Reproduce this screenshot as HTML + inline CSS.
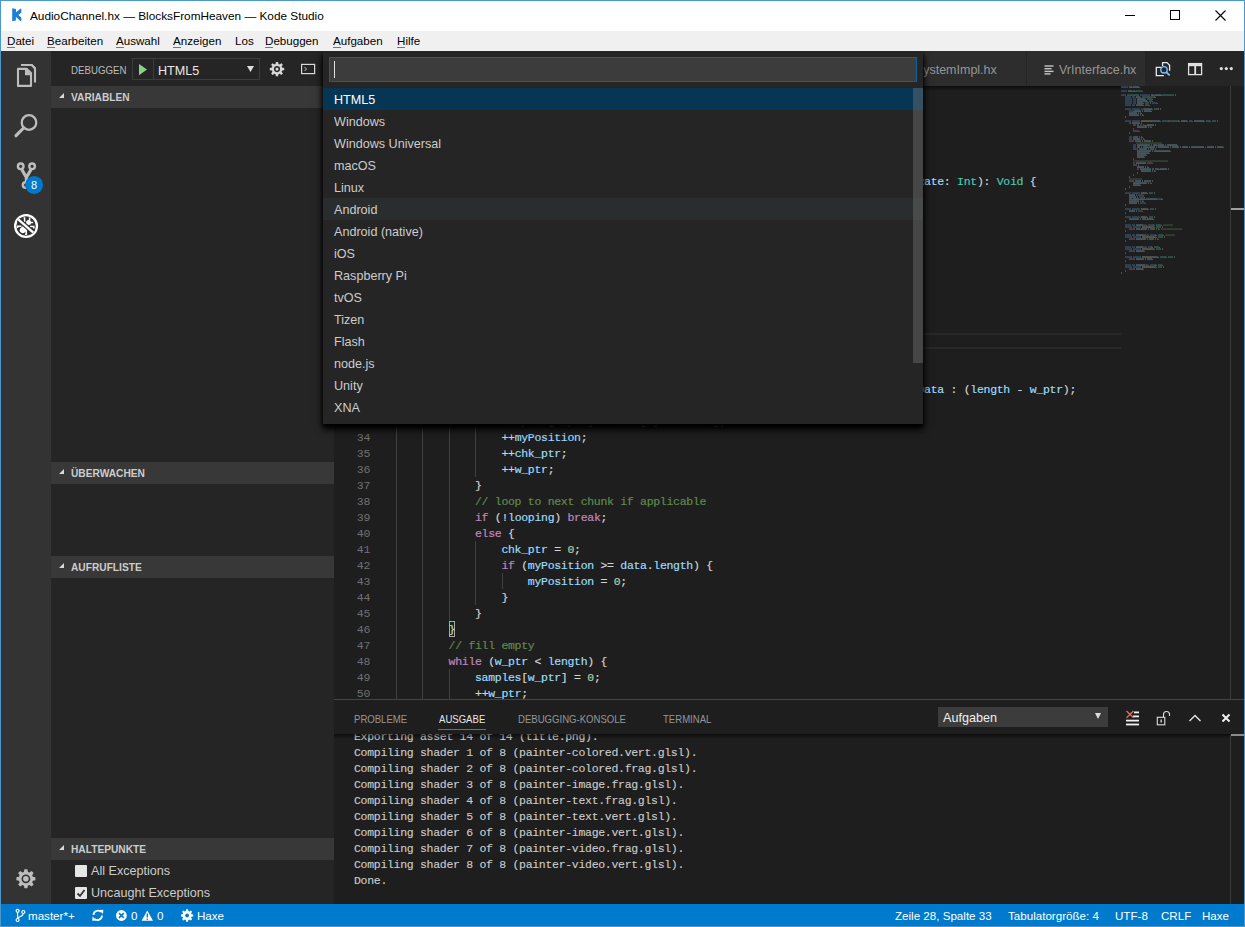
<!DOCTYPE html>
<html><head><meta charset="utf-8">
<style>
*{margin:0;padding:0;box-sizing:border-box}
html,body{width:1245px;height:927px;overflow:hidden;background:#1e1e1e;font-family:"Liberation Sans",sans-serif}
.a{position:absolute}
#title{z-index:20;left:1px;top:1px;width:1243px;height:30px;background:#fff}
#title .t{left:29px;top:7.6px;font-size:11.8px;color:#000;white-space:nowrap}
#menu{z-index:20;left:1px;top:31px;width:1243px;height:20px;background:#f0f0f0}
#menu span{position:absolute;top:3px;font-size:11.6px;color:#000;white-space:nowrap}
#menu u{text-decoration:none;border-bottom:1px solid #777;}
#act{left:1px;top:51px;width:50px;height:853px;background:#333}
#side{left:51px;top:51px;width:283px;height:853px;background:#252526;overflow:hidden}
.hdr{position:absolute;left:0;width:283px;height:22px;background:#383838;color:#ccc;font-weight:bold;font-size:10.2px}
.hdr span{position:absolute;left:20px;top:6px}
.hdr i{position:absolute;left:8px;top:7px;width:0;height:0;border-left:5.5px solid transparent;border-bottom:5.5px solid #d8d8d8}
#editor{left:334px;top:51px;width:910px;height:853px;background:#1e1e1e;overflow:hidden}
#tabs{left:0;top:0;width:910px;height:35px;background:#252526}
.tab{position:absolute;top:0;height:35px;background:#2d2d2d;color:#969696;font-size:12.5px;white-space:nowrap}
#code{left:0;top:35px;width:910px;height:614px;overflow:hidden}
.ln{position:absolute;left:0;width:36px;text-align:right;height:16px;line-height:17px;font-family:"Liberation Mono",monospace;font-size:11.5px;letter-spacing:-0.3px;color:#707070}
.cl{-webkit-text-stroke:0.18px currentColor;position:absolute;left:61.8px;height:16px;line-height:17px;font-family:"Liberation Mono",monospace;font-size:11.5px;letter-spacing:-0.3px;color:#d4d4d4;white-space:pre}
.ig{position:absolute;width:1px;height:16px;background:#404040}
#panel{left:0;top:648px;width:910px;height:205px;background:#1e1e1e;border-top:1px solid #454545;overflow:hidden}
.pt{position:absolute;top:13px;font-size:11px;transform:scaleX(.87);transform-origin:0 0;color:#969696;white-space:nowrap}
.ol{-webkit-text-stroke:0.12px currentColor;position:absolute;left:20px;height:16px;line-height:16px;font-family:"Liberation Mono",monospace;font-size:11.5px;letter-spacing:-0.3px;color:#cccccc;white-space:pre}
#status{left:1px;top:904px;width:1243px;height:22px;background:#007acc;color:#fff;font-size:11.6px}
#status span{position:absolute;top:4.7px;white-space:nowrap}
#qo{z-index:10;left:323px;top:51px;width:600px;height:373px;background:#252526;box-shadow:0 5px 8px #000,0 3px 4px #000}
.qi{position:absolute;left:0;width:600px;height:22px;color:#cccccc;font-size:12.6px}
.qi span{position:absolute;left:11px;top:5px;white-space:nowrap}
.qi.sel{background:#073655;color:#fff}
.qi.hov{background:#2a2d2e}
</style></head><body>
<div class="a" style="left:0;top:0;width:1245px;height:927px;background:#4a98cc"></div>
<div id="title" class="a">

 <span class="a t">AudioChannel.hx — BlocksFromHeaven — Kode Studio</span>
 <div class="a" style="left:1124px;top:14px;width:10px;height:1px;background:#000"></div>
 <div class="a" style="left:1169px;top:9px;width:10px;height:10px;border:1px solid #000"></div>
 <svg class="a" style="left:1214px;top:9px" width="11" height="11"><path d="M0.5 0.5 L10.5 10.5 M10.5 0.5 L0.5 10.5" stroke="#000" stroke-width="1.1"/></svg>
</div>
<div id="menu" class="a">
 <span style="left:6px"><u>D</u>atei</span>
 <span style="left:46px"><u>B</u>earbeiten</span>
 <span style="left:115px"><u>A</u>uswahl</span>
 <span style="left:172px"><u>A</u>nzeigen</span>
 <span style="left:234px">Los</span>
 <span style="left:264px"><u>D</u>ebuggen</span>
 <span style="left:332px"><u>A</u>ufgaben</span>
 <span style="left:396px"><u>H</u>ilfe</span>
</div>
<div id="act" class="a">
 
</div>
<div id="side" class="a">
 <span class="a" style="left:20px;top:12.5px;font-size:11px;transform:scaleX(.88);transform-origin:0 0;color:#bbbbbb">DEBUGGEN</span>
 <div class="a" style="left:81px;top:7px;width:128px;height:22px;border:1px solid #3c3c3c"></div>
 <div class="a" style="left:102px;top:8px;width:1px;height:20px;background:#3c3c3c"></div>
 <svg class="a" style="left:88px;top:12.5px" width="9" height="12"><path d="M0 0 L8 5.6 L0 11.2 Z" fill="#89d185"/></svg>
 <span class="a" style="left:107px;top:12.6px;font-size:12.6px;color:#e8e8e8">HTML5</span>
 <svg class="a" style="left:196px;top:15px" width="7" height="6"><path d="M0 0 L7 0 L3.5 6 Z" fill="#ddd"/></svg>
 <div class="hdr" style="top:35px"><i></i><span>VARIABLEN</span></div>
 <div class="hdr" style="top:411px"><i></i><span>ÜBERWACHEN</span></div>
 <div class="hdr" style="top:505px"><i></i><span>AUFRUFLISTE</span></div>
 <div class="hdr" style="top:787px"><i></i><span>HALTEPUNKTE</span></div>
 <div class="a" style="left:24px;top:814px;width:12px;height:12px;background:#e6e6e6;border-radius:1px"></div>
 <span class="a" style="left:40px;top:813px;font-size:12.6px;color:#cccccc">All Exceptions</span>
 <div class="a" style="left:24px;top:836px;width:12px;height:12px;background:#e6e6e6;border-radius:1px"></div>
 <svg class="a" style="left:24px;top:836px" width="12" height="12"><path d="M2.5 6.5 L5 9 L9.5 3" stroke="#333" stroke-width="1.8" fill="none"/></svg>
 <span class="a" style="left:40px;top:835px;font-size:12.6px;color:#cccccc">Uncaught Exceptions</span>
</div>
<div id="editor" class="a">
 <div id="tabs" class="a">
  <div class="tab" style="left:0;width:692px"><span class="a" style="left:544px;top:12px">BlocksSystemImpl.hx</span></div>
  <div class="tab" style="left:693px;width:118px"><span class="a" style="left:32px;top:12px">VrInterface.hx</span></div>
 </div>
 <div id="code" class="a">
  <div class="a" style="left:0;top:247px;width:787px;height:16px;border-top:2px solid #282828;border-bottom:2px solid #282828"></div>
  <div class="a" style="left:115px;top:535px;width:6px;height:16px;border:1px solid #a8a8a8;background:#0a2a1a"></div>
  <div class="ig" style="left:62.0px;top:-9px"></div><div class="ig" style="left:62.0px;top:7px"></div><div class="ig" style="left:88.4px;top:7px"></div><div class="ig" style="left:62.0px;top:23px"></div><div class="ig" style="left:88.4px;top:23px"></div><div class="ig" style="left:62.0px;top:39px"></div><div class="ig" style="left:88.4px;top:39px"></div><div class="ig" style="left:62.0px;top:55px"></div><div class="ig" style="left:62.0px;top:71px"></div><div class="ig" style="left:62.0px;top:87px"></div><div class="ig" style="left:62.0px;top:103px"></div><div class="ig" style="left:88.4px;top:103px"></div><div class="ig" style="left:62.0px;top:119px"></div><div class="ig" style="left:88.4px;top:119px"></div><div class="ig" style="left:114.8px;top:119px"></div><div class="ig" style="left:62.0px;top:135px"></div><div class="ig" style="left:88.4px;top:135px"></div><div class="ig" style="left:114.8px;top:135px"></div><div class="ig" style="left:141.2px;top:135px"></div><div class="ig" style="left:62.0px;top:151px"></div><div class="ig" style="left:88.4px;top:151px"></div><div class="ig" style="left:114.8px;top:151px"></div><div class="ig" style="left:62.0px;top:167px"></div><div class="ig" style="left:88.4px;top:167px"></div><div class="ig" style="left:114.8px;top:167px"></div><div class="ig" style="left:62.0px;top:183px"></div><div class="ig" style="left:88.4px;top:183px"></div><div class="ig" style="left:62.0px;top:199px"></div><div class="ig" style="left:88.4px;top:199px"></div><div class="ig" style="left:62.0px;top:215px"></div><div class="ig" style="left:88.4px;top:215px"></div><div class="ig" style="left:62.0px;top:231px"></div><div class="ig" style="left:88.4px;top:231px"></div><div class="ig" style="left:62.0px;top:247px"></div><div class="ig" style="left:88.4px;top:247px"></div><div class="ig" style="left:62.0px;top:263px"></div><div class="ig" style="left:88.4px;top:263px"></div><div class="ig" style="left:114.8px;top:263px"></div><div class="ig" style="left:62.0px;top:279px"></div><div class="ig" style="left:88.4px;top:279px"></div><div class="ig" style="left:114.8px;top:279px"></div><div class="ig" style="left:62.0px;top:295px"></div><div class="ig" style="left:88.4px;top:295px"></div><div class="ig" style="left:114.8px;top:295px"></div><div class="ig" style="left:62.0px;top:311px"></div><div class="ig" style="left:88.4px;top:311px"></div><div class="ig" style="left:114.8px;top:311px"></div><div class="ig" style="left:62.0px;top:327px"></div><div class="ig" style="left:88.4px;top:327px"></div><div class="ig" style="left:114.8px;top:327px"></div><div class="ig" style="left:141.2px;top:327px"></div><div class="ig" style="left:62.0px;top:343px"></div><div class="ig" style="left:88.4px;top:343px"></div><div class="ig" style="left:114.8px;top:343px"></div><div class="ig" style="left:141.2px;top:343px"></div><div class="ig" style="left:62.0px;top:359px"></div><div class="ig" style="left:88.4px;top:359px"></div><div class="ig" style="left:114.8px;top:359px"></div><div class="ig" style="left:141.2px;top:359px"></div><div class="ig" style="left:62.0px;top:375px"></div><div class="ig" style="left:88.4px;top:375px"></div><div class="ig" style="left:114.8px;top:375px"></div><div class="ig" style="left:141.2px;top:375px"></div><div class="ig" style="left:62.0px;top:391px"></div><div class="ig" style="left:88.4px;top:391px"></div><div class="ig" style="left:114.8px;top:391px"></div><div class="ig" style="left:62.0px;top:407px"></div><div class="ig" style="left:88.4px;top:407px"></div><div class="ig" style="left:114.8px;top:407px"></div><div class="ig" style="left:62.0px;top:423px"></div><div class="ig" style="left:88.4px;top:423px"></div><div class="ig" style="left:114.8px;top:423px"></div><div class="ig" style="left:62.0px;top:439px"></div><div class="ig" style="left:88.4px;top:439px"></div><div class="ig" style="left:114.8px;top:439px"></div><div class="ig" style="left:62.0px;top:455px"></div><div class="ig" style="left:88.4px;top:455px"></div><div class="ig" style="left:114.8px;top:455px"></div><div class="ig" style="left:141.2px;top:455px"></div><div class="ig" style="left:62.0px;top:471px"></div><div class="ig" style="left:88.4px;top:471px"></div><div class="ig" style="left:114.8px;top:471px"></div><div class="ig" style="left:141.2px;top:471px"></div><div class="ig" style="left:62.0px;top:487px"></div><div class="ig" style="left:88.4px;top:487px"></div><div class="ig" style="left:114.8px;top:487px"></div><div class="ig" style="left:141.2px;top:487px"></div><div class="ig" style="left:167.6px;top:487px"></div><div class="ig" style="left:62.0px;top:503px"></div><div class="ig" style="left:88.4px;top:503px"></div><div class="ig" style="left:114.8px;top:503px"></div><div class="ig" style="left:141.2px;top:503px"></div><div class="ig" style="left:62.0px;top:519px"></div><div class="ig" style="left:88.4px;top:519px"></div><div class="ig" style="left:114.8px;top:519px"></div><div class="ig" style="left:62.0px;top:535px"></div><div class="ig" style="left:88.4px;top:535px"></div><div class="ig" style="left:62.0px;top:551px"></div><div class="ig" style="left:88.4px;top:551px"></div><div class="ig" style="left:62.0px;top:567px"></div><div class="ig" style="left:88.4px;top:567px"></div><div class="ig" style="left:62.0px;top:583px"></div><div class="ig" style="left:88.4px;top:583px"></div><div class="ig" style="left:114.8px;top:583px"></div><div class="ig" style="left:62.0px;top:599px"></div><div class="ig" style="left:88.4px;top:599px"></div><div class="ig" style="left:114.8px;top:599px"></div><div class="ig" style="left:62.0px;top:615px"></div><div class="ig" style="left:88.4px;top:615px"></div>
  <div class="ln" style="top:-9px">12</div>
<div class="cl" style="top:-9px">    <span style="color:#569cd6">public</span> <span style="color:#569cd6">function</span> <span style="color:#569cd6">new</span><span style="color:#d4d4d4">(</span><span style="color:#9cdcfe">looping</span><span style="color:#d4d4d4">:</span> <span style="color:#4ec9b0">Bool</span><span style="color:#d4d4d4">)</span> <span style="color:#d4d4d4">{</span></div>
<div class="ln" style="top:7px">13</div>
<div class="cl" style="top:7px">        <span style="color:#569cd6">this</span><span style="color:#d4d4d4">.</span><span style="color:#9cdcfe">looping</span> <span style="color:#d4d4d4">=</span> <span style="color:#9cdcfe">looping</span><span style="color:#d4d4d4">;</span></div>
<div class="ln" style="top:23px">14</div>
<div class="cl" style="top:23px">        <span style="color:#9cdcfe">myVolume</span> <span style="color:#d4d4d4">=</span> <span style="color:#b5cea8">1</span><span style="color:#d4d4d4">;</span></div>
<div class="ln" style="top:39px">15</div>
<div class="cl" style="top:39px">        <span style="color:#9cdcfe">myPosition</span> <span style="color:#d4d4d4">=</span> <span style="color:#b5cea8">0</span><span style="color:#d4d4d4">;</span></div>
<div class="ln" style="top:55px">16</div>
<div class="cl" style="top:55px">    <span style="color:#d4d4d4">}</span></div>
<div class="ln" style="top:71px">17</div>
<div class="cl" style="top:71px"></div>
<div class="ln" style="top:87px">18</div>
<div class="cl" style="top:87px">    <span style="color:#569cd6">public</span> <span style="color:#569cd6">function</span> <span style="color:#dcdcaa">nextSamples</span><span style="color:#d4d4d4">(</span><span style="color:#9cdcfe">samples</span><span style="color:#d4d4d4">:</span> <span style="color:#4ec9b0">Vector</span><span style="color:#d4d4d4">&lt;</span><span style="color:#4ec9b0">FastFloat</span><span style="color:#d4d4d4">&gt;</span><span style="color:#d4d4d4">,</span> <span style="color:#9cdcfe">length</span><span style="color:#d4d4d4">:</span> <span style="color:#4ec9b0">Int</span><span style="color:#d4d4d4">,</span> <span style="color:#9cdcfe">sampleRate</span><span style="color:#d4d4d4">:</span> <span style="color:#4ec9b0">Int</span><span style="color:#d4d4d4">)</span><span style="color:#d4d4d4">:</span> <span style="color:#4ec9b0">Void</span> <span style="color:#d4d4d4">{</span></div>
<div class="ln" style="top:103px">19</div>
<div class="cl" style="top:103px">        <span style="color:#c586c0">if</span> <span style="color:#d4d4d4">(</span><span style="color:#9cdcfe">paused</span><span style="color:#d4d4d4">)</span> <span style="color:#d4d4d4">{</span></div>
<div class="ln" style="top:119px">20</div>
<div class="cl" style="top:119px">            <span style="color:#c586c0">for</span> <span style="color:#d4d4d4">(</span><span style="color:#9cdcfe">i</span> <span style="color:#c586c0">in</span> <span style="color:#b5cea8">0</span><span style="color:#d4d4d4">.</span><span style="color:#d4d4d4">.</span><span style="color:#d4d4d4">.</span><span style="color:#9cdcfe">length</span><span style="color:#d4d4d4">)</span> <span style="color:#d4d4d4">{</span></div>
<div class="ln" style="top:135px">21</div>
<div class="cl" style="top:135px">                <span style="color:#9cdcfe">samples</span><span style="color:#d4d4d4">[</span><span style="color:#9cdcfe">i</span><span style="color:#d4d4d4">]</span> <span style="color:#d4d4d4">=</span> <span style="color:#b5cea8">0</span><span style="color:#d4d4d4">;</span></div>
<div class="ln" style="top:151px">22</div>
<div class="cl" style="top:151px">            <span style="color:#d4d4d4">}</span></div>
<div class="ln" style="top:167px">23</div>
<div class="cl" style="top:167px">            <span style="color:#c586c0">return</span><span style="color:#d4d4d4">;</span></div>
<div class="ln" style="top:183px">24</div>
<div class="cl" style="top:183px">        <span style="color:#d4d4d4">}</span></div>
<div class="ln" style="top:199px">25</div>
<div class="cl" style="top:199px"></div>
<div class="ln" style="top:215px">26</div>
<div class="cl" style="top:215px">        <span style="color:#569cd6">var</span> <span style="color:#9cdcfe">w_ptr</span> <span style="color:#d4d4d4">=</span> <span style="color:#b5cea8">0</span><span style="color:#d4d4d4">;</span></div>
<div class="ln" style="top:231px">27</div>
<div class="cl" style="top:231px">        <span style="color:#569cd6">var</span> <span style="color:#9cdcfe">chk_ptr</span> <span style="color:#d4d4d4">=</span> <span style="color:#b5cea8">0</span><span style="color:#d4d4d4">;</span></div>
<div class="ln" style="top:247px">28</div>
<div class="cl" style="top:247px">        <span style="color:#c586c0">while</span> <span style="color:#d4d4d4">(</span><span style="color:#9cdcfe">w_ptr</span> <span style="color:#d4d4d4">&lt;</span> <span style="color:#9cdcfe">length</span><span style="color:#d4d4d4">)</span> <span style="color:#d4d4d4">{</span></div>
<div class="ln" style="top:263px">29</div>
<div class="cl" style="top:263px">               <span style="color:#608b4e">// compute chunk to stream</span></div>
<div class="ln" style="top:279px">30</div>
<div class="cl" style="top:279px">            <span style="color:#569cd6">var</span> <span style="color:#9cdcfe">remainingData</span> <span style="color:#d4d4d4">=</span> <span style="color:#9cdcfe">data</span><span style="color:#d4d4d4">.</span><span style="color:#9cdcfe">length</span> <span style="color:#d4d4d4">-</span> <span style="color:#9cdcfe">myPosition</span><span style="color:#d4d4d4">;</span></div>
<div class="ln" style="top:295px">31</div>
<div class="cl" style="top:295px">            <span style="color:#569cd6">var</span> <span style="color:#9cdcfe">chk</span> <span style="color:#d4d4d4">=</span> <span style="color:#d4d4d4">(</span><span style="color:#9cdcfe">data</span><span style="color:#d4d4d4">.</span><span style="color:#9cdcfe">length</span> <span style="color:#d4d4d4">-</span> <span style="color:#9cdcfe">myPosition</span><span style="color:#d4d4d4">)</span> <span style="color:#d4d4d4">&lt;</span> <span style="color:#d4d4d4">(</span><span style="color:#9cdcfe">length</span> <span style="color:#d4d4d4">-</span> <span style="color:#9cdcfe">w_ptr</span><span style="color:#d4d4d4">)</span> <span style="color:#d4d4d4">?</span> <span style="color:#9cdcfe">remainingData</span> <span style="color:#d4d4d4">:</span> <span style="color:#d4d4d4">(</span><span style="color:#9cdcfe">length</span> <span style="color:#d4d4d4">-</span> <span style="color:#9cdcfe">w_ptr</span><span style="color:#d4d4d4">)</span><span style="color:#d4d4d4">;</span></div>
<div class="ln" style="top:311px">32</div>
<div class="cl" style="top:311px">            <span style="color:#c586c0">while</span> <span style="color:#d4d4d4">(</span><span style="color:#9cdcfe">chk_ptr</span> <span style="color:#d4d4d4">&lt;</span> <span style="color:#9cdcfe">chk</span><span style="color:#d4d4d4">)</span> <span style="color:#d4d4d4">{</span></div>
<div class="ln" style="top:327px">33</div>
<div class="cl" style="top:327px">                <span style="color:#9cdcfe">samples</span><span style="color:#d4d4d4">[</span><span style="color:#9cdcfe">w_ptr</span><span style="color:#d4d4d4">]</span> <span style="color:#d4d4d4">=</span> <span style="color:#9cdcfe">data</span><span style="color:#d4d4d4">[</span><span style="color:#9cdcfe">myPosition</span><span style="color:#d4d4d4">]</span><span style="color:#d4d4d4">;</span></div>
<div class="ln" style="top:343px">34</div>
<div class="cl" style="top:343px">                <span style="color:#d4d4d4">+</span><span style="color:#d4d4d4">+</span><span style="color:#9cdcfe">myPosition</span><span style="color:#d4d4d4">;</span></div>
<div class="ln" style="top:359px">35</div>
<div class="cl" style="top:359px">                <span style="color:#d4d4d4">+</span><span style="color:#d4d4d4">+</span><span style="color:#9cdcfe">chk_ptr</span><span style="color:#d4d4d4">;</span></div>
<div class="ln" style="top:375px">36</div>
<div class="cl" style="top:375px">                <span style="color:#d4d4d4">+</span><span style="color:#d4d4d4">+</span><span style="color:#9cdcfe">w_ptr</span><span style="color:#d4d4d4">;</span></div>
<div class="ln" style="top:391px">37</div>
<div class="cl" style="top:391px">            <span style="color:#d4d4d4">}</span></div>
<div class="ln" style="top:407px">38</div>
<div class="cl" style="top:407px">            <span style="color:#608b4e">// loop to next chunk if applicable</span></div>
<div class="ln" style="top:423px">39</div>
<div class="cl" style="top:423px">            <span style="color:#c586c0">if</span> <span style="color:#d4d4d4">(</span><span style="color:#d4d4d4">!</span><span style="color:#9cdcfe">looping</span><span style="color:#d4d4d4">)</span> <span style="color:#c586c0">break</span><span style="color:#d4d4d4">;</span></div>
<div class="ln" style="top:439px">40</div>
<div class="cl" style="top:439px">            <span style="color:#c586c0">else</span> <span style="color:#d4d4d4">{</span></div>
<div class="ln" style="top:455px">41</div>
<div class="cl" style="top:455px">                <span style="color:#9cdcfe">chk_ptr</span> <span style="color:#d4d4d4">=</span> <span style="color:#b5cea8">0</span><span style="color:#d4d4d4">;</span></div>
<div class="ln" style="top:471px">42</div>
<div class="cl" style="top:471px">                <span style="color:#c586c0">if</span> <span style="color:#d4d4d4">(</span><span style="color:#9cdcfe">myPosition</span> <span style="color:#d4d4d4">&gt;</span><span style="color:#d4d4d4">=</span> <span style="color:#9cdcfe">data</span><span style="color:#d4d4d4">.</span><span style="color:#9cdcfe">length</span><span style="color:#d4d4d4">)</span> <span style="color:#d4d4d4">{</span></div>
<div class="ln" style="top:487px">43</div>
<div class="cl" style="top:487px">                    <span style="color:#9cdcfe">myPosition</span> <span style="color:#d4d4d4">=</span> <span style="color:#b5cea8">0</span><span style="color:#d4d4d4">;</span></div>
<div class="ln" style="top:503px">44</div>
<div class="cl" style="top:503px">                <span style="color:#d4d4d4">}</span></div>
<div class="ln" style="top:519px">45</div>
<div class="cl" style="top:519px">            <span style="color:#d4d4d4">}</span></div>
<div class="ln" style="top:535px">46</div>
<div class="cl" style="top:535px">        <span style="color:#d4d4d4">}</span></div>
<div class="ln" style="top:551px">47</div>
<div class="cl" style="top:551px">        <span style="color:#608b4e">// fill empty</span></div>
<div class="ln" style="top:567px">48</div>
<div class="cl" style="top:567px">        <span style="color:#c586c0">while</span> <span style="color:#d4d4d4">(</span><span style="color:#9cdcfe">w_ptr</span> <span style="color:#d4d4d4">&lt;</span> <span style="color:#9cdcfe">length</span><span style="color:#d4d4d4">)</span> <span style="color:#d4d4d4">{</span></div>
<div class="ln" style="top:583px">49</div>
<div class="cl" style="top:583px">            <span style="color:#9cdcfe">samples</span><span style="color:#d4d4d4">[</span><span style="color:#9cdcfe">w_ptr</span><span style="color:#d4d4d4">]</span> <span style="color:#d4d4d4">=</span> <span style="color:#b5cea8">0</span><span style="color:#d4d4d4">;</span></div>
<div class="ln" style="top:599px">50</div>
<div class="cl" style="top:599px">            <span style="color:#d4d4d4">+</span><span style="color:#d4d4d4">+</span><span style="color:#9cdcfe">w_ptr</span><span style="color:#d4d4d4">;</span></div>
<div class="ln" style="top:615px">51</div>
<div class="cl" style="top:615px">        <span style="color:#d4d4d4">}</span></div>
 </div>
 <svg class="a" style="left:787px;top:35px;opacity:.5" width="110" height="200"><rect x="0" y="0.4" width="0.85" height="1.3" fill="#569cd6"/><rect x="1" y="0.4" width="0.85" height="1.3" fill="#569cd6"/><rect x="2" y="0.4" width="0.85" height="1.3" fill="#569cd6"/><rect x="3" y="0.4" width="0.85" height="1.3" fill="#569cd6"/><rect x="4" y="0.4" width="0.85" height="1.3" fill="#569cd6"/><rect x="5" y="0.4" width="0.85" height="1.3" fill="#569cd6"/><rect x="6" y="0.4" width="0.85" height="1.3" fill="#569cd6"/><rect x="8" y="0.4" width="0.85" height="1.3" fill="#9cdcfe"/><rect x="9" y="0.4" width="0.85" height="1.3" fill="#9cdcfe"/><rect x="10" y="0.4" width="0.85" height="1.3" fill="#9cdcfe"/><rect x="11.1" y="0.9" width="0.7" height="0.9" fill="#d4d4d4"/><rect x="12" y="0.4" width="0.85" height="1.3" fill="#9cdcfe"/><rect x="13" y="0.4" width="0.85" height="1.3" fill="#9cdcfe"/><rect x="14" y="0.4" width="0.85" height="1.3" fill="#9cdcfe"/><rect x="15" y="0.4" width="0.85" height="1.3" fill="#9cdcfe"/><rect x="16" y="0.4" width="0.85" height="1.3" fill="#9cdcfe"/><rect x="17" y="0.4" width="0.85" height="1.3" fill="#9cdcfe"/><rect x="18.1" y="0.9" width="0.7" height="0.9" fill="#d4d4d4"/><rect x="0" y="4.4" width="0.85" height="1.3" fill="#569cd6"/><rect x="1" y="4.4" width="0.85" height="1.3" fill="#569cd6"/><rect x="2" y="4.4" width="0.85" height="1.3" fill="#569cd6"/><rect x="3" y="4.4" width="0.85" height="1.3" fill="#569cd6"/><rect x="4" y="4.4" width="0.85" height="1.3" fill="#569cd6"/><rect x="5" y="4.4" width="0.85" height="1.3" fill="#569cd6"/><rect x="7" y="4.4" width="0.85" height="1.3" fill="#9cdcfe"/><rect x="8" y="4.4" width="0.85" height="1.3" fill="#9cdcfe"/><rect x="9" y="4.4" width="0.85" height="1.3" fill="#9cdcfe"/><rect x="10" y="4.4" width="0.85" height="1.3" fill="#9cdcfe"/><rect x="11.1" y="4.9" width="0.7" height="0.9" fill="#d4d4d4"/><rect x="12" y="4.4" width="0.85" height="1.3" fill="#9cdcfe"/><rect x="13" y="4.4" width="0.85" height="1.3" fill="#9cdcfe"/><rect x="14.1" y="4.9" width="0.7" height="0.9" fill="#d4d4d4"/><rect x="15" y="4.4" width="0.85" height="1.3" fill="#4ec9b0"/><rect x="16" y="4.4" width="0.85" height="1.3" fill="#4ec9b0"/><rect x="17" y="4.4" width="0.85" height="1.3" fill="#4ec9b0"/><rect x="18" y="4.4" width="0.85" height="1.3" fill="#4ec9b0"/><rect x="19" y="4.4" width="0.85" height="1.3" fill="#4ec9b0"/><rect x="20" y="4.4" width="0.85" height="1.3" fill="#4ec9b0"/><rect x="21.1" y="4.9" width="0.7" height="0.9" fill="#d4d4d4"/><rect x="0" y="8.4" width="0.85" height="1.3" fill="#569cd6"/><rect x="1" y="8.4" width="0.85" height="1.3" fill="#569cd6"/><rect x="2" y="8.4" width="0.85" height="1.3" fill="#569cd6"/><rect x="3" y="8.4" width="0.85" height="1.3" fill="#569cd6"/><rect x="4" y="8.4" width="0.85" height="1.3" fill="#569cd6"/><rect x="6" y="8.4" width="0.85" height="1.3" fill="#4ec9b0"/><rect x="7" y="8.4" width="0.85" height="1.3" fill="#4ec9b0"/><rect x="8" y="8.4" width="0.85" height="1.3" fill="#4ec9b0"/><rect x="9" y="8.4" width="0.85" height="1.3" fill="#4ec9b0"/><rect x="10" y="8.4" width="0.85" height="1.3" fill="#4ec9b0"/><rect x="11" y="8.4" width="0.85" height="1.3" fill="#4ec9b0"/><rect x="12" y="8.4" width="0.85" height="1.3" fill="#4ec9b0"/><rect x="13" y="8.4" width="0.85" height="1.3" fill="#4ec9b0"/><rect x="14" y="8.4" width="0.85" height="1.3" fill="#4ec9b0"/><rect x="15" y="8.4" width="0.85" height="1.3" fill="#4ec9b0"/><rect x="16" y="8.4" width="0.85" height="1.3" fill="#4ec9b0"/><rect x="17" y="8.4" width="0.85" height="1.3" fill="#4ec9b0"/><rect x="19" y="8.4" width="0.85" height="1.3" fill="#569cd6"/><rect x="20" y="8.4" width="0.85" height="1.3" fill="#569cd6"/><rect x="21" y="8.4" width="0.85" height="1.3" fill="#569cd6"/><rect x="22" y="8.4" width="0.85" height="1.3" fill="#569cd6"/><rect x="23" y="8.4" width="0.85" height="1.3" fill="#569cd6"/><rect x="24" y="8.4" width="0.85" height="1.3" fill="#569cd6"/><rect x="25" y="8.4" width="0.85" height="1.3" fill="#569cd6"/><rect x="26" y="8.4" width="0.85" height="1.3" fill="#569cd6"/><rect x="27" y="8.4" width="0.85" height="1.3" fill="#569cd6"/><rect x="28" y="8.4" width="0.85" height="1.3" fill="#569cd6"/><rect x="30" y="8.4" width="0.85" height="1.3" fill="#9cdcfe"/><rect x="31" y="8.4" width="0.85" height="1.3" fill="#9cdcfe"/><rect x="32" y="8.4" width="0.85" height="1.3" fill="#9cdcfe"/><rect x="33.1" y="8.9" width="0.7" height="0.9" fill="#d4d4d4"/><rect x="34" y="8.4" width="0.85" height="1.3" fill="#9cdcfe"/><rect x="35" y="8.4" width="0.85" height="1.3" fill="#9cdcfe"/><rect x="36" y="8.4" width="0.85" height="1.3" fill="#9cdcfe"/><rect x="37" y="8.4" width="0.85" height="1.3" fill="#9cdcfe"/><rect x="38" y="8.4" width="0.85" height="1.3" fill="#9cdcfe"/><rect x="39" y="8.4" width="0.85" height="1.3" fill="#9cdcfe"/><rect x="40.1" y="8.9" width="0.7" height="0.9" fill="#d4d4d4"/><rect x="41" y="8.4" width="0.85" height="1.3" fill="#4ec9b0"/><rect x="42" y="8.4" width="0.85" height="1.3" fill="#4ec9b0"/><rect x="43" y="8.4" width="0.85" height="1.3" fill="#4ec9b0"/><rect x="44" y="8.4" width="0.85" height="1.3" fill="#4ec9b0"/><rect x="45" y="8.4" width="0.85" height="1.3" fill="#4ec9b0"/><rect x="46" y="8.4" width="0.85" height="1.3" fill="#4ec9b0"/><rect x="47" y="8.4" width="0.85" height="1.3" fill="#4ec9b0"/><rect x="48" y="8.4" width="0.85" height="1.3" fill="#4ec9b0"/><rect x="49" y="8.4" width="0.85" height="1.3" fill="#4ec9b0"/><rect x="50" y="8.4" width="0.85" height="1.3" fill="#4ec9b0"/><rect x="51" y="8.4" width="0.85" height="1.3" fill="#4ec9b0"/><rect x="52" y="8.4" width="0.85" height="1.3" fill="#4ec9b0"/><rect x="54.1" y="8.4" width="0.8" height="1.3" fill="#d4d4d4"/><rect x="4" y="10.4" width="0.85" height="1.3" fill="#569cd6"/><rect x="5" y="10.4" width="0.85" height="1.3" fill="#569cd6"/><rect x="6" y="10.4" width="0.85" height="1.3" fill="#569cd6"/><rect x="7" y="10.4" width="0.85" height="1.3" fill="#569cd6"/><rect x="8" y="10.4" width="0.85" height="1.3" fill="#569cd6"/><rect x="9" y="10.4" width="0.85" height="1.3" fill="#569cd6"/><rect x="11" y="10.4" width="0.85" height="1.3" fill="#569cd6"/><rect x="12" y="10.4" width="0.85" height="1.3" fill="#569cd6"/><rect x="13" y="10.4" width="0.85" height="1.3" fill="#569cd6"/><rect x="15" y="10.4" width="0.85" height="1.3" fill="#9cdcfe"/><rect x="16" y="10.4" width="0.85" height="1.3" fill="#9cdcfe"/><rect x="17" y="10.4" width="0.85" height="1.3" fill="#9cdcfe"/><rect x="18" y="10.4" width="0.85" height="1.3" fill="#9cdcfe"/><rect x="19.1" y="10.9" width="0.7" height="0.9" fill="#d4d4d4"/><rect x="21" y="10.4" width="0.85" height="1.3" fill="#4ec9b0"/><rect x="22" y="10.4" width="0.85" height="1.3" fill="#4ec9b0"/><rect x="23" y="10.4" width="0.85" height="1.3" fill="#4ec9b0"/><rect x="24" y="10.4" width="0.85" height="1.3" fill="#4ec9b0"/><rect x="25" y="10.4" width="0.85" height="1.3" fill="#4ec9b0"/><rect x="26" y="10.4" width="0.85" height="1.3" fill="#4ec9b0"/><rect x="27.1" y="10.4" width="0.8" height="1.3" fill="#d4d4d4"/><rect x="28" y="10.4" width="0.85" height="1.3" fill="#4ec9b0"/><rect x="29" y="10.4" width="0.85" height="1.3" fill="#4ec9b0"/><rect x="30" y="10.4" width="0.85" height="1.3" fill="#4ec9b0"/><rect x="31" y="10.4" width="0.85" height="1.3" fill="#4ec9b0"/><rect x="32" y="10.4" width="0.85" height="1.3" fill="#4ec9b0"/><rect x="33.1" y="10.4" width="0.8" height="1.3" fill="#d4d4d4"/><rect x="34.1" y="10.9" width="0.7" height="0.9" fill="#d4d4d4"/><rect x="4" y="12.4" width="0.85" height="1.3" fill="#569cd6"/><rect x="5" y="12.4" width="0.85" height="1.3" fill="#569cd6"/><rect x="6" y="12.4" width="0.85" height="1.3" fill="#569cd6"/><rect x="7" y="12.4" width="0.85" height="1.3" fill="#569cd6"/><rect x="8" y="12.4" width="0.85" height="1.3" fill="#569cd6"/><rect x="9" y="12.4" width="0.85" height="1.3" fill="#569cd6"/><rect x="10" y="12.4" width="0.85" height="1.3" fill="#569cd6"/><rect x="12" y="12.4" width="0.85" height="1.3" fill="#569cd6"/><rect x="13" y="12.4" width="0.85" height="1.3" fill="#569cd6"/><rect x="14" y="12.4" width="0.85" height="1.3" fill="#569cd6"/><rect x="16" y="12.4" width="0.85" height="1.3" fill="#9cdcfe"/><rect x="17" y="12.4" width="0.85" height="1.3" fill="#9cdcfe"/><rect x="18" y="12.4" width="0.85" height="1.3" fill="#9cdcfe"/><rect x="19" y="12.4" width="0.85" height="1.3" fill="#9cdcfe"/><rect x="20" y="12.4" width="0.85" height="1.3" fill="#9cdcfe"/><rect x="21" y="12.4" width="0.85" height="1.3" fill="#9cdcfe"/><rect x="22" y="12.4" width="0.85" height="1.3" fill="#9cdcfe"/><rect x="23" y="12.4" width="0.85" height="1.3" fill="#9cdcfe"/><rect x="24.1" y="12.9" width="0.7" height="0.9" fill="#d4d4d4"/><rect x="26" y="12.4" width="0.85" height="1.3" fill="#4ec9b0"/><rect x="27" y="12.4" width="0.85" height="1.3" fill="#4ec9b0"/><rect x="28" y="12.4" width="0.85" height="1.3" fill="#4ec9b0"/><rect x="29" y="12.4" width="0.85" height="1.3" fill="#4ec9b0"/><rect x="30" y="12.4" width="0.85" height="1.3" fill="#4ec9b0"/><rect x="31.1" y="12.9" width="0.7" height="0.9" fill="#d4d4d4"/><rect x="4" y="14.4" width="0.85" height="1.3" fill="#569cd6"/><rect x="5" y="14.4" width="0.85" height="1.3" fill="#569cd6"/><rect x="6" y="14.4" width="0.85" height="1.3" fill="#569cd6"/><rect x="7" y="14.4" width="0.85" height="1.3" fill="#569cd6"/><rect x="8" y="14.4" width="0.85" height="1.3" fill="#569cd6"/><rect x="9" y="14.4" width="0.85" height="1.3" fill="#569cd6"/><rect x="10" y="14.4" width="0.85" height="1.3" fill="#569cd6"/><rect x="12" y="14.4" width="0.85" height="1.3" fill="#569cd6"/><rect x="13" y="14.4" width="0.85" height="1.3" fill="#569cd6"/><rect x="14" y="14.4" width="0.85" height="1.3" fill="#569cd6"/><rect x="16" y="14.4" width="0.85" height="1.3" fill="#9cdcfe"/><rect x="17" y="14.4" width="0.85" height="1.3" fill="#9cdcfe"/><rect x="18" y="14.4" width="0.85" height="1.3" fill="#9cdcfe"/><rect x="19" y="14.4" width="0.85" height="1.3" fill="#9cdcfe"/><rect x="20" y="14.4" width="0.85" height="1.3" fill="#9cdcfe"/><rect x="21" y="14.4" width="0.85" height="1.3" fill="#9cdcfe"/><rect x="22" y="14.4" width="0.85" height="1.3" fill="#9cdcfe"/><rect x="23" y="14.4" width="0.85" height="1.3" fill="#9cdcfe"/><rect x="24" y="14.4" width="0.85" height="1.3" fill="#9cdcfe"/><rect x="25" y="14.4" width="0.85" height="1.3" fill="#9cdcfe"/><rect x="26.1" y="14.9" width="0.7" height="0.9" fill="#d4d4d4"/><rect x="28" y="14.4" width="0.85" height="1.3" fill="#4ec9b0"/><rect x="29" y="14.4" width="0.85" height="1.3" fill="#4ec9b0"/><rect x="30" y="14.4" width="0.85" height="1.3" fill="#4ec9b0"/><rect x="31.1" y="14.9" width="0.7" height="0.9" fill="#d4d4d4"/><rect x="4" y="16.4" width="0.85" height="1.3" fill="#569cd6"/><rect x="5" y="16.4" width="0.85" height="1.3" fill="#569cd6"/><rect x="6" y="16.4" width="0.85" height="1.3" fill="#569cd6"/><rect x="7" y="16.4" width="0.85" height="1.3" fill="#569cd6"/><rect x="8" y="16.4" width="0.85" height="1.3" fill="#569cd6"/><rect x="9" y="16.4" width="0.85" height="1.3" fill="#569cd6"/><rect x="10" y="16.4" width="0.85" height="1.3" fill="#569cd6"/><rect x="12" y="16.4" width="0.85" height="1.3" fill="#569cd6"/><rect x="13" y="16.4" width="0.85" height="1.3" fill="#569cd6"/><rect x="14" y="16.4" width="0.85" height="1.3" fill="#569cd6"/><rect x="16" y="16.4" width="0.85" height="1.3" fill="#9cdcfe"/><rect x="17" y="16.4" width="0.85" height="1.3" fill="#9cdcfe"/><rect x="18" y="16.4" width="0.85" height="1.3" fill="#9cdcfe"/><rect x="19" y="16.4" width="0.85" height="1.3" fill="#9cdcfe"/><rect x="20" y="16.4" width="0.85" height="1.3" fill="#9cdcfe"/><rect x="21" y="16.4" width="0.85" height="1.3" fill="#9cdcfe"/><rect x="22.1" y="16.9" width="0.7" height="0.9" fill="#d4d4d4"/><rect x="24" y="16.4" width="0.85" height="1.3" fill="#4ec9b0"/><rect x="25" y="16.4" width="0.85" height="1.3" fill="#4ec9b0"/><rect x="26" y="16.4" width="0.85" height="1.3" fill="#4ec9b0"/><rect x="27" y="16.4" width="0.85" height="1.3" fill="#4ec9b0"/><rect x="29.1" y="16.4" width="0.8" height="1.3" fill="#d4d4d4"/><rect x="31" y="16.4" width="0.85" height="1.3" fill="#569cd6"/><rect x="32" y="16.4" width="0.85" height="1.3" fill="#569cd6"/><rect x="33" y="16.4" width="0.85" height="1.3" fill="#569cd6"/><rect x="34" y="16.4" width="0.85" height="1.3" fill="#569cd6"/><rect x="35" y="16.4" width="0.85" height="1.3" fill="#569cd6"/><rect x="36.1" y="16.9" width="0.7" height="0.9" fill="#d4d4d4"/><rect x="4" y="18.4" width="0.85" height="1.3" fill="#569cd6"/><rect x="5" y="18.4" width="0.85" height="1.3" fill="#569cd6"/><rect x="6" y="18.4" width="0.85" height="1.3" fill="#569cd6"/><rect x="7" y="18.4" width="0.85" height="1.3" fill="#569cd6"/><rect x="8" y="18.4" width="0.85" height="1.3" fill="#569cd6"/><rect x="9" y="18.4" width="0.85" height="1.3" fill="#569cd6"/><rect x="11" y="18.4" width="0.85" height="1.3" fill="#569cd6"/><rect x="12" y="18.4" width="0.85" height="1.3" fill="#569cd6"/><rect x="13" y="18.4" width="0.85" height="1.3" fill="#569cd6"/><rect x="15" y="18.4" width="0.85" height="1.3" fill="#9cdcfe"/><rect x="16" y="18.4" width="0.85" height="1.3" fill="#9cdcfe"/><rect x="17" y="18.4" width="0.85" height="1.3" fill="#9cdcfe"/><rect x="18" y="18.4" width="0.85" height="1.3" fill="#9cdcfe"/><rect x="19" y="18.4" width="0.85" height="1.3" fill="#9cdcfe"/><rect x="20" y="18.4" width="0.85" height="1.3" fill="#9cdcfe"/><rect x="21" y="18.4" width="0.85" height="1.3" fill="#9cdcfe"/><rect x="22.1" y="18.9" width="0.7" height="0.9" fill="#d4d4d4"/><rect x="24" y="18.4" width="0.85" height="1.3" fill="#4ec9b0"/><rect x="25" y="18.4" width="0.85" height="1.3" fill="#4ec9b0"/><rect x="26" y="18.4" width="0.85" height="1.3" fill="#4ec9b0"/><rect x="27" y="18.4" width="0.85" height="1.3" fill="#4ec9b0"/><rect x="28.1" y="18.9" width="0.7" height="0.9" fill="#d4d4d4"/><rect x="4" y="22.4" width="0.85" height="1.3" fill="#569cd6"/><rect x="5" y="22.4" width="0.85" height="1.3" fill="#569cd6"/><rect x="6" y="22.4" width="0.85" height="1.3" fill="#569cd6"/><rect x="7" y="22.4" width="0.85" height="1.3" fill="#569cd6"/><rect x="8" y="22.4" width="0.85" height="1.3" fill="#569cd6"/><rect x="9" y="22.4" width="0.85" height="1.3" fill="#569cd6"/><rect x="11" y="22.4" width="0.85" height="1.3" fill="#569cd6"/><rect x="12" y="22.4" width="0.85" height="1.3" fill="#569cd6"/><rect x="13" y="22.4" width="0.85" height="1.3" fill="#569cd6"/><rect x="14" y="22.4" width="0.85" height="1.3" fill="#569cd6"/><rect x="15" y="22.4" width="0.85" height="1.3" fill="#569cd6"/><rect x="16" y="22.4" width="0.85" height="1.3" fill="#569cd6"/><rect x="17" y="22.4" width="0.85" height="1.3" fill="#569cd6"/><rect x="18" y="22.4" width="0.85" height="1.3" fill="#569cd6"/><rect x="20" y="22.4" width="0.85" height="1.3" fill="#569cd6"/><rect x="21" y="22.4" width="0.85" height="1.3" fill="#569cd6"/><rect x="22" y="22.4" width="0.85" height="1.3" fill="#569cd6"/><rect x="23.1" y="22.4" width="0.8" height="1.3" fill="#d4d4d4"/><rect x="24" y="22.4" width="0.85" height="1.3" fill="#9cdcfe"/><rect x="25" y="22.4" width="0.85" height="1.3" fill="#9cdcfe"/><rect x="26" y="22.4" width="0.85" height="1.3" fill="#9cdcfe"/><rect x="27" y="22.4" width="0.85" height="1.3" fill="#9cdcfe"/><rect x="28" y="22.4" width="0.85" height="1.3" fill="#9cdcfe"/><rect x="29" y="22.4" width="0.85" height="1.3" fill="#9cdcfe"/><rect x="30" y="22.4" width="0.85" height="1.3" fill="#9cdcfe"/><rect x="31.1" y="22.9" width="0.7" height="0.9" fill="#d4d4d4"/><rect x="33" y="22.4" width="0.85" height="1.3" fill="#4ec9b0"/><rect x="34" y="22.4" width="0.85" height="1.3" fill="#4ec9b0"/><rect x="35" y="22.4" width="0.85" height="1.3" fill="#4ec9b0"/><rect x="36" y="22.4" width="0.85" height="1.3" fill="#4ec9b0"/><rect x="37.1" y="22.4" width="0.8" height="1.3" fill="#d4d4d4"/><rect x="39.1" y="22.4" width="0.8" height="1.3" fill="#d4d4d4"/><rect x="8" y="24.4" width="0.85" height="1.3" fill="#569cd6"/><rect x="9" y="24.4" width="0.85" height="1.3" fill="#569cd6"/><rect x="10" y="24.4" width="0.85" height="1.3" fill="#569cd6"/><rect x="11" y="24.4" width="0.85" height="1.3" fill="#569cd6"/><rect x="12.1" y="24.9" width="0.7" height="0.9" fill="#d4d4d4"/><rect x="13" y="24.4" width="0.85" height="1.3" fill="#9cdcfe"/><rect x="14" y="24.4" width="0.85" height="1.3" fill="#9cdcfe"/><rect x="15" y="24.4" width="0.85" height="1.3" fill="#9cdcfe"/><rect x="16" y="24.4" width="0.85" height="1.3" fill="#9cdcfe"/><rect x="17" y="24.4" width="0.85" height="1.3" fill="#9cdcfe"/><rect x="18" y="24.4" width="0.85" height="1.3" fill="#9cdcfe"/><rect x="19" y="24.4" width="0.85" height="1.3" fill="#9cdcfe"/><rect x="21.1" y="24.4" width="0.8" height="1.3" fill="#d4d4d4"/><rect x="23" y="24.4" width="0.85" height="1.3" fill="#9cdcfe"/><rect x="24" y="24.4" width="0.85" height="1.3" fill="#9cdcfe"/><rect x="25" y="24.4" width="0.85" height="1.3" fill="#9cdcfe"/><rect x="26" y="24.4" width="0.85" height="1.3" fill="#9cdcfe"/><rect x="27" y="24.4" width="0.85" height="1.3" fill="#9cdcfe"/><rect x="28" y="24.4" width="0.85" height="1.3" fill="#9cdcfe"/><rect x="29" y="24.4" width="0.85" height="1.3" fill="#9cdcfe"/><rect x="30.1" y="24.9" width="0.7" height="0.9" fill="#d4d4d4"/><rect x="8" y="26.4" width="0.85" height="1.3" fill="#9cdcfe"/><rect x="9" y="26.4" width="0.85" height="1.3" fill="#9cdcfe"/><rect x="10" y="26.4" width="0.85" height="1.3" fill="#9cdcfe"/><rect x="11" y="26.4" width="0.85" height="1.3" fill="#9cdcfe"/><rect x="12" y="26.4" width="0.85" height="1.3" fill="#9cdcfe"/><rect x="13" y="26.4" width="0.85" height="1.3" fill="#9cdcfe"/><rect x="14" y="26.4" width="0.85" height="1.3" fill="#9cdcfe"/><rect x="15" y="26.4" width="0.85" height="1.3" fill="#9cdcfe"/><rect x="17.1" y="26.4" width="0.8" height="1.3" fill="#d4d4d4"/><rect x="19" y="26.4" width="0.85" height="1.3" fill="#b5cea8"/><rect x="20.1" y="26.9" width="0.7" height="0.9" fill="#d4d4d4"/><rect x="8" y="28.4" width="0.85" height="1.3" fill="#9cdcfe"/><rect x="9" y="28.4" width="0.85" height="1.3" fill="#9cdcfe"/><rect x="10" y="28.4" width="0.85" height="1.3" fill="#9cdcfe"/><rect x="11" y="28.4" width="0.85" height="1.3" fill="#9cdcfe"/><rect x="12" y="28.4" width="0.85" height="1.3" fill="#9cdcfe"/><rect x="13" y="28.4" width="0.85" height="1.3" fill="#9cdcfe"/><rect x="14" y="28.4" width="0.85" height="1.3" fill="#9cdcfe"/><rect x="15" y="28.4" width="0.85" height="1.3" fill="#9cdcfe"/><rect x="16" y="28.4" width="0.85" height="1.3" fill="#9cdcfe"/><rect x="17" y="28.4" width="0.85" height="1.3" fill="#9cdcfe"/><rect x="19.1" y="28.4" width="0.8" height="1.3" fill="#d4d4d4"/><rect x="21" y="28.4" width="0.85" height="1.3" fill="#b5cea8"/><rect x="22.1" y="28.9" width="0.7" height="0.9" fill="#d4d4d4"/><rect x="4.1" y="30.4" width="0.8" height="1.3" fill="#d4d4d4"/><rect x="4" y="34.4" width="0.85" height="1.3" fill="#569cd6"/><rect x="5" y="34.4" width="0.85" height="1.3" fill="#569cd6"/><rect x="6" y="34.4" width="0.85" height="1.3" fill="#569cd6"/><rect x="7" y="34.4" width="0.85" height="1.3" fill="#569cd6"/><rect x="8" y="34.4" width="0.85" height="1.3" fill="#569cd6"/><rect x="9" y="34.4" width="0.85" height="1.3" fill="#569cd6"/><rect x="11" y="34.4" width="0.85" height="1.3" fill="#569cd6"/><rect x="12" y="34.4" width="0.85" height="1.3" fill="#569cd6"/><rect x="13" y="34.4" width="0.85" height="1.3" fill="#569cd6"/><rect x="14" y="34.4" width="0.85" height="1.3" fill="#569cd6"/><rect x="15" y="34.4" width="0.85" height="1.3" fill="#569cd6"/><rect x="16" y="34.4" width="0.85" height="1.3" fill="#569cd6"/><rect x="17" y="34.4" width="0.85" height="1.3" fill="#569cd6"/><rect x="18" y="34.4" width="0.85" height="1.3" fill="#569cd6"/><rect x="20" y="34.4" width="0.85" height="1.3" fill="#dcdcaa"/><rect x="21" y="34.4" width="0.85" height="1.3" fill="#dcdcaa"/><rect x="22" y="34.4" width="0.85" height="1.3" fill="#dcdcaa"/><rect x="23" y="34.4" width="0.85" height="1.3" fill="#dcdcaa"/><rect x="24" y="34.4" width="0.85" height="1.3" fill="#dcdcaa"/><rect x="25" y="34.4" width="0.85" height="1.3" fill="#dcdcaa"/><rect x="26" y="34.4" width="0.85" height="1.3" fill="#dcdcaa"/><rect x="27" y="34.4" width="0.85" height="1.3" fill="#dcdcaa"/><rect x="28" y="34.4" width="0.85" height="1.3" fill="#dcdcaa"/><rect x="29" y="34.4" width="0.85" height="1.3" fill="#dcdcaa"/><rect x="30" y="34.4" width="0.85" height="1.3" fill="#dcdcaa"/><rect x="31.1" y="34.4" width="0.8" height="1.3" fill="#d4d4d4"/><rect x="32" y="34.4" width="0.85" height="1.3" fill="#9cdcfe"/><rect x="33" y="34.4" width="0.85" height="1.3" fill="#9cdcfe"/><rect x="34" y="34.4" width="0.85" height="1.3" fill="#9cdcfe"/><rect x="35" y="34.4" width="0.85" height="1.3" fill="#9cdcfe"/><rect x="36" y="34.4" width="0.85" height="1.3" fill="#9cdcfe"/><rect x="37" y="34.4" width="0.85" height="1.3" fill="#9cdcfe"/><rect x="38" y="34.4" width="0.85" height="1.3" fill="#9cdcfe"/><rect x="39.1" y="34.9" width="0.7" height="0.9" fill="#d4d4d4"/><rect x="41" y="34.4" width="0.85" height="1.3" fill="#4ec9b0"/><rect x="42" y="34.4" width="0.85" height="1.3" fill="#4ec9b0"/><rect x="43" y="34.4" width="0.85" height="1.3" fill="#4ec9b0"/><rect x="44" y="34.4" width="0.85" height="1.3" fill="#4ec9b0"/><rect x="45" y="34.4" width="0.85" height="1.3" fill="#4ec9b0"/><rect x="46" y="34.4" width="0.85" height="1.3" fill="#4ec9b0"/><rect x="47.1" y="34.4" width="0.8" height="1.3" fill="#d4d4d4"/><rect x="48" y="34.4" width="0.85" height="1.3" fill="#4ec9b0"/><rect x="49" y="34.4" width="0.85" height="1.3" fill="#4ec9b0"/><rect x="50" y="34.4" width="0.85" height="1.3" fill="#4ec9b0"/><rect x="51" y="34.4" width="0.85" height="1.3" fill="#4ec9b0"/><rect x="52" y="34.4" width="0.85" height="1.3" fill="#4ec9b0"/><rect x="53" y="34.4" width="0.85" height="1.3" fill="#4ec9b0"/><rect x="54" y="34.4" width="0.85" height="1.3" fill="#4ec9b0"/><rect x="55" y="34.4" width="0.85" height="1.3" fill="#4ec9b0"/><rect x="56" y="34.4" width="0.85" height="1.3" fill="#4ec9b0"/><rect x="57.1" y="34.4" width="0.8" height="1.3" fill="#d4d4d4"/><rect x="58.1" y="34.9" width="0.7" height="0.9" fill="#d4d4d4"/><rect x="60" y="34.4" width="0.85" height="1.3" fill="#9cdcfe"/><rect x="61" y="34.4" width="0.85" height="1.3" fill="#9cdcfe"/><rect x="62" y="34.4" width="0.85" height="1.3" fill="#9cdcfe"/><rect x="63" y="34.4" width="0.85" height="1.3" fill="#9cdcfe"/><rect x="64" y="34.4" width="0.85" height="1.3" fill="#9cdcfe"/><rect x="65" y="34.4" width="0.85" height="1.3" fill="#9cdcfe"/><rect x="66.1" y="34.9" width="0.7" height="0.9" fill="#d4d4d4"/><rect x="68" y="34.4" width="0.85" height="1.3" fill="#4ec9b0"/><rect x="69" y="34.4" width="0.85" height="1.3" fill="#4ec9b0"/><rect x="70" y="34.4" width="0.85" height="1.3" fill="#4ec9b0"/><rect x="71.1" y="34.9" width="0.7" height="0.9" fill="#d4d4d4"/><rect x="73" y="34.4" width="0.85" height="1.3" fill="#9cdcfe"/><rect x="74" y="34.4" width="0.85" height="1.3" fill="#9cdcfe"/><rect x="75" y="34.4" width="0.85" height="1.3" fill="#9cdcfe"/><rect x="76" y="34.4" width="0.85" height="1.3" fill="#9cdcfe"/><rect x="77" y="34.4" width="0.85" height="1.3" fill="#9cdcfe"/><rect x="78" y="34.4" width="0.85" height="1.3" fill="#9cdcfe"/><rect x="79" y="34.4" width="0.85" height="1.3" fill="#9cdcfe"/><rect x="80" y="34.4" width="0.85" height="1.3" fill="#9cdcfe"/><rect x="81" y="34.4" width="0.85" height="1.3" fill="#9cdcfe"/><rect x="82" y="34.4" width="0.85" height="1.3" fill="#9cdcfe"/><rect x="83.1" y="34.9" width="0.7" height="0.9" fill="#d4d4d4"/><rect x="85" y="34.4" width="0.85" height="1.3" fill="#4ec9b0"/><rect x="86" y="34.4" width="0.85" height="1.3" fill="#4ec9b0"/><rect x="87" y="34.4" width="0.85" height="1.3" fill="#4ec9b0"/><rect x="88.1" y="34.4" width="0.8" height="1.3" fill="#d4d4d4"/><rect x="89.1" y="34.9" width="0.7" height="0.9" fill="#d4d4d4"/><rect x="91" y="34.4" width="0.85" height="1.3" fill="#4ec9b0"/><rect x="92" y="34.4" width="0.85" height="1.3" fill="#4ec9b0"/><rect x="93" y="34.4" width="0.85" height="1.3" fill="#4ec9b0"/><rect x="94" y="34.4" width="0.85" height="1.3" fill="#4ec9b0"/><rect x="96.1" y="34.4" width="0.8" height="1.3" fill="#d4d4d4"/><rect x="8" y="36.4" width="0.85" height="1.3" fill="#c586c0"/><rect x="9" y="36.4" width="0.85" height="1.3" fill="#c586c0"/><rect x="11.1" y="36.4" width="0.8" height="1.3" fill="#d4d4d4"/><rect x="12" y="36.4" width="0.85" height="1.3" fill="#9cdcfe"/><rect x="13" y="36.4" width="0.85" height="1.3" fill="#9cdcfe"/><rect x="14" y="36.4" width="0.85" height="1.3" fill="#9cdcfe"/><rect x="15" y="36.4" width="0.85" height="1.3" fill="#9cdcfe"/><rect x="16" y="36.4" width="0.85" height="1.3" fill="#9cdcfe"/><rect x="17" y="36.4" width="0.85" height="1.3" fill="#9cdcfe"/><rect x="18.1" y="36.4" width="0.8" height="1.3" fill="#d4d4d4"/><rect x="20.1" y="36.4" width="0.8" height="1.3" fill="#d4d4d4"/><rect x="12" y="38.4" width="0.85" height="1.3" fill="#c586c0"/><rect x="13" y="38.4" width="0.85" height="1.3" fill="#c586c0"/><rect x="14" y="38.4" width="0.85" height="1.3" fill="#c586c0"/><rect x="16.1" y="38.4" width="0.8" height="1.3" fill="#d4d4d4"/><rect x="17" y="38.4" width="0.85" height="1.3" fill="#9cdcfe"/><rect x="19" y="38.4" width="0.85" height="1.3" fill="#c586c0"/><rect x="20" y="38.4" width="0.85" height="1.3" fill="#c586c0"/><rect x="22" y="38.4" width="0.85" height="1.3" fill="#b5cea8"/><rect x="23.1" y="38.9" width="0.7" height="0.9" fill="#d4d4d4"/><rect x="24.1" y="38.9" width="0.7" height="0.9" fill="#d4d4d4"/><rect x="25.1" y="38.9" width="0.7" height="0.9" fill="#d4d4d4"/><rect x="26" y="38.4" width="0.85" height="1.3" fill="#9cdcfe"/><rect x="27" y="38.4" width="0.85" height="1.3" fill="#9cdcfe"/><rect x="28" y="38.4" width="0.85" height="1.3" fill="#9cdcfe"/><rect x="29" y="38.4" width="0.85" height="1.3" fill="#9cdcfe"/><rect x="30" y="38.4" width="0.85" height="1.3" fill="#9cdcfe"/><rect x="31" y="38.4" width="0.85" height="1.3" fill="#9cdcfe"/><rect x="32.1" y="38.4" width="0.8" height="1.3" fill="#d4d4d4"/><rect x="34.1" y="38.4" width="0.8" height="1.3" fill="#d4d4d4"/><rect x="16" y="40.4" width="0.85" height="1.3" fill="#9cdcfe"/><rect x="17" y="40.4" width="0.85" height="1.3" fill="#9cdcfe"/><rect x="18" y="40.4" width="0.85" height="1.3" fill="#9cdcfe"/><rect x="19" y="40.4" width="0.85" height="1.3" fill="#9cdcfe"/><rect x="20" y="40.4" width="0.85" height="1.3" fill="#9cdcfe"/><rect x="21" y="40.4" width="0.85" height="1.3" fill="#9cdcfe"/><rect x="22" y="40.4" width="0.85" height="1.3" fill="#9cdcfe"/><rect x="23.1" y="40.4" width="0.8" height="1.3" fill="#d4d4d4"/><rect x="24" y="40.4" width="0.85" height="1.3" fill="#9cdcfe"/><rect x="25.1" y="40.4" width="0.8" height="1.3" fill="#d4d4d4"/><rect x="27.1" y="40.4" width="0.8" height="1.3" fill="#d4d4d4"/><rect x="29" y="40.4" width="0.85" height="1.3" fill="#b5cea8"/><rect x="30.1" y="40.9" width="0.7" height="0.9" fill="#d4d4d4"/><rect x="12.1" y="42.4" width="0.8" height="1.3" fill="#d4d4d4"/><rect x="12" y="44.4" width="0.85" height="1.3" fill="#c586c0"/><rect x="13" y="44.4" width="0.85" height="1.3" fill="#c586c0"/><rect x="14" y="44.4" width="0.85" height="1.3" fill="#c586c0"/><rect x="15" y="44.4" width="0.85" height="1.3" fill="#c586c0"/><rect x="16" y="44.4" width="0.85" height="1.3" fill="#c586c0"/><rect x="17" y="44.4" width="0.85" height="1.3" fill="#c586c0"/><rect x="18.1" y="44.9" width="0.7" height="0.9" fill="#d4d4d4"/><rect x="8.1" y="46.4" width="0.8" height="1.3" fill="#d4d4d4"/><rect x="8" y="50.4" width="0.85" height="1.3" fill="#569cd6"/><rect x="9" y="50.4" width="0.85" height="1.3" fill="#569cd6"/><rect x="10" y="50.4" width="0.85" height="1.3" fill="#569cd6"/><rect x="12" y="50.4" width="0.85" height="1.3" fill="#9cdcfe"/><rect x="13.1" y="50.4" width="0.8" height="1.3" fill="#9cdcfe"/><rect x="14" y="50.4" width="0.85" height="1.3" fill="#9cdcfe"/><rect x="15" y="50.4" width="0.85" height="1.3" fill="#9cdcfe"/><rect x="16" y="50.4" width="0.85" height="1.3" fill="#9cdcfe"/><rect x="18.1" y="50.4" width="0.8" height="1.3" fill="#d4d4d4"/><rect x="20" y="50.4" width="0.85" height="1.3" fill="#b5cea8"/><rect x="21.1" y="50.9" width="0.7" height="0.9" fill="#d4d4d4"/><rect x="8" y="52.4" width="0.85" height="1.3" fill="#569cd6"/><rect x="9" y="52.4" width="0.85" height="1.3" fill="#569cd6"/><rect x="10" y="52.4" width="0.85" height="1.3" fill="#569cd6"/><rect x="12" y="52.4" width="0.85" height="1.3" fill="#9cdcfe"/><rect x="13" y="52.4" width="0.85" height="1.3" fill="#9cdcfe"/><rect x="14" y="52.4" width="0.85" height="1.3" fill="#9cdcfe"/><rect x="15.1" y="52.4" width="0.8" height="1.3" fill="#9cdcfe"/><rect x="16" y="52.4" width="0.85" height="1.3" fill="#9cdcfe"/><rect x="17" y="52.4" width="0.85" height="1.3" fill="#9cdcfe"/><rect x="18" y="52.4" width="0.85" height="1.3" fill="#9cdcfe"/><rect x="20.1" y="52.4" width="0.8" height="1.3" fill="#d4d4d4"/><rect x="22" y="52.4" width="0.85" height="1.3" fill="#b5cea8"/><rect x="23.1" y="52.9" width="0.7" height="0.9" fill="#d4d4d4"/><rect x="8" y="54.4" width="0.85" height="1.3" fill="#c586c0"/><rect x="9" y="54.4" width="0.85" height="1.3" fill="#c586c0"/><rect x="10" y="54.4" width="0.85" height="1.3" fill="#c586c0"/><rect x="11" y="54.4" width="0.85" height="1.3" fill="#c586c0"/><rect x="12" y="54.4" width="0.85" height="1.3" fill="#c586c0"/><rect x="14.1" y="54.4" width="0.8" height="1.3" fill="#d4d4d4"/><rect x="15" y="54.4" width="0.85" height="1.3" fill="#9cdcfe"/><rect x="16.1" y="54.4" width="0.8" height="1.3" fill="#9cdcfe"/><rect x="17" y="54.4" width="0.85" height="1.3" fill="#9cdcfe"/><rect x="18" y="54.4" width="0.85" height="1.3" fill="#9cdcfe"/><rect x="19" y="54.4" width="0.85" height="1.3" fill="#9cdcfe"/><rect x="21.1" y="54.4" width="0.8" height="1.3" fill="#d4d4d4"/><rect x="23" y="54.4" width="0.85" height="1.3" fill="#9cdcfe"/><rect x="24" y="54.4" width="0.85" height="1.3" fill="#9cdcfe"/><rect x="25" y="54.4" width="0.85" height="1.3" fill="#9cdcfe"/><rect x="26" y="54.4" width="0.85" height="1.3" fill="#9cdcfe"/><rect x="27" y="54.4" width="0.85" height="1.3" fill="#9cdcfe"/><rect x="28" y="54.4" width="0.85" height="1.3" fill="#9cdcfe"/><rect x="29.1" y="54.4" width="0.8" height="1.3" fill="#d4d4d4"/><rect x="31.1" y="54.4" width="0.8" height="1.3" fill="#d4d4d4"/><rect x="15.1" y="56.4" width="0.8" height="1.3" fill="#608b4e"/><rect x="16.1" y="56.4" width="0.8" height="1.3" fill="#608b4e"/><rect x="17" y="56.4" width="0.85" height="1.3" fill="#608b4e"/><rect x="18" y="56.4" width="0.85" height="1.3" fill="#608b4e"/><rect x="19" y="56.4" width="0.85" height="1.3" fill="#608b4e"/><rect x="20" y="56.4" width="0.85" height="1.3" fill="#608b4e"/><rect x="21" y="56.4" width="0.85" height="1.3" fill="#608b4e"/><rect x="22" y="56.4" width="0.85" height="1.3" fill="#608b4e"/><rect x="23" y="56.4" width="0.85" height="1.3" fill="#608b4e"/><rect x="24" y="56.4" width="0.85" height="1.3" fill="#608b4e"/><rect x="25" y="56.4" width="0.85" height="1.3" fill="#608b4e"/><rect x="26" y="56.4" width="0.85" height="1.3" fill="#608b4e"/><rect x="27" y="56.4" width="0.85" height="1.3" fill="#608b4e"/><rect x="28" y="56.4" width="0.85" height="1.3" fill="#608b4e"/><rect x="29" y="56.4" width="0.85" height="1.3" fill="#608b4e"/><rect x="30" y="56.4" width="0.85" height="1.3" fill="#608b4e"/><rect x="31" y="56.4" width="0.85" height="1.3" fill="#608b4e"/><rect x="32" y="56.4" width="0.85" height="1.3" fill="#608b4e"/><rect x="33" y="56.4" width="0.85" height="1.3" fill="#608b4e"/><rect x="34" y="56.4" width="0.85" height="1.3" fill="#608b4e"/><rect x="35" y="56.4" width="0.85" height="1.3" fill="#608b4e"/><rect x="36" y="56.4" width="0.85" height="1.3" fill="#608b4e"/><rect x="37" y="56.4" width="0.85" height="1.3" fill="#608b4e"/><rect x="38" y="56.4" width="0.85" height="1.3" fill="#608b4e"/><rect x="39" y="56.4" width="0.85" height="1.3" fill="#608b4e"/><rect x="40" y="56.4" width="0.85" height="1.3" fill="#608b4e"/><rect x="12" y="58.4" width="0.85" height="1.3" fill="#569cd6"/><rect x="13" y="58.4" width="0.85" height="1.3" fill="#569cd6"/><rect x="14" y="58.4" width="0.85" height="1.3" fill="#569cd6"/><rect x="16" y="58.4" width="0.85" height="1.3" fill="#9cdcfe"/><rect x="17" y="58.4" width="0.85" height="1.3" fill="#9cdcfe"/><rect x="18" y="58.4" width="0.85" height="1.3" fill="#9cdcfe"/><rect x="19" y="58.4" width="0.85" height="1.3" fill="#9cdcfe"/><rect x="20" y="58.4" width="0.85" height="1.3" fill="#9cdcfe"/><rect x="21" y="58.4" width="0.85" height="1.3" fill="#9cdcfe"/><rect x="22" y="58.4" width="0.85" height="1.3" fill="#9cdcfe"/><rect x="23" y="58.4" width="0.85" height="1.3" fill="#9cdcfe"/><rect x="24" y="58.4" width="0.85" height="1.3" fill="#9cdcfe"/><rect x="25" y="58.4" width="0.85" height="1.3" fill="#9cdcfe"/><rect x="26" y="58.4" width="0.85" height="1.3" fill="#9cdcfe"/><rect x="27" y="58.4" width="0.85" height="1.3" fill="#9cdcfe"/><rect x="28" y="58.4" width="0.85" height="1.3" fill="#9cdcfe"/><rect x="30.1" y="58.4" width="0.8" height="1.3" fill="#d4d4d4"/><rect x="32" y="58.4" width="0.85" height="1.3" fill="#9cdcfe"/><rect x="33" y="58.4" width="0.85" height="1.3" fill="#9cdcfe"/><rect x="34" y="58.4" width="0.85" height="1.3" fill="#9cdcfe"/><rect x="35" y="58.4" width="0.85" height="1.3" fill="#9cdcfe"/><rect x="36.1" y="58.9" width="0.7" height="0.9" fill="#d4d4d4"/><rect x="37" y="58.4" width="0.85" height="1.3" fill="#9cdcfe"/><rect x="38" y="58.4" width="0.85" height="1.3" fill="#9cdcfe"/><rect x="39" y="58.4" width="0.85" height="1.3" fill="#9cdcfe"/><rect x="40" y="58.4" width="0.85" height="1.3" fill="#9cdcfe"/><rect x="41" y="58.4" width="0.85" height="1.3" fill="#9cdcfe"/><rect x="42" y="58.4" width="0.85" height="1.3" fill="#9cdcfe"/><rect x="44.1" y="58.4" width="0.8" height="1.3" fill="#d4d4d4"/><rect x="46" y="58.4" width="0.85" height="1.3" fill="#9cdcfe"/><rect x="47" y="58.4" width="0.85" height="1.3" fill="#9cdcfe"/><rect x="48" y="58.4" width="0.85" height="1.3" fill="#9cdcfe"/><rect x="49" y="58.4" width="0.85" height="1.3" fill="#9cdcfe"/><rect x="50" y="58.4" width="0.85" height="1.3" fill="#9cdcfe"/><rect x="51" y="58.4" width="0.85" height="1.3" fill="#9cdcfe"/><rect x="52" y="58.4" width="0.85" height="1.3" fill="#9cdcfe"/><rect x="53" y="58.4" width="0.85" height="1.3" fill="#9cdcfe"/><rect x="54" y="58.4" width="0.85" height="1.3" fill="#9cdcfe"/><rect x="55" y="58.4" width="0.85" height="1.3" fill="#9cdcfe"/><rect x="56.1" y="58.9" width="0.7" height="0.9" fill="#d4d4d4"/><rect x="12" y="60.4" width="0.85" height="1.3" fill="#569cd6"/><rect x="13" y="60.4" width="0.85" height="1.3" fill="#569cd6"/><rect x="14" y="60.4" width="0.85" height="1.3" fill="#569cd6"/><rect x="16" y="60.4" width="0.85" height="1.3" fill="#9cdcfe"/><rect x="17" y="60.4" width="0.85" height="1.3" fill="#9cdcfe"/><rect x="18" y="60.4" width="0.85" height="1.3" fill="#9cdcfe"/><rect x="20.1" y="60.4" width="0.8" height="1.3" fill="#d4d4d4"/><rect x="22.1" y="60.4" width="0.8" height="1.3" fill="#d4d4d4"/><rect x="23" y="60.4" width="0.85" height="1.3" fill="#9cdcfe"/><rect x="24" y="60.4" width="0.85" height="1.3" fill="#9cdcfe"/><rect x="25" y="60.4" width="0.85" height="1.3" fill="#9cdcfe"/><rect x="26" y="60.4" width="0.85" height="1.3" fill="#9cdcfe"/><rect x="27.1" y="60.9" width="0.7" height="0.9" fill="#d4d4d4"/><rect x="28" y="60.4" width="0.85" height="1.3" fill="#9cdcfe"/><rect x="29" y="60.4" width="0.85" height="1.3" fill="#9cdcfe"/><rect x="30" y="60.4" width="0.85" height="1.3" fill="#9cdcfe"/><rect x="31" y="60.4" width="0.85" height="1.3" fill="#9cdcfe"/><rect x="32" y="60.4" width="0.85" height="1.3" fill="#9cdcfe"/><rect x="33" y="60.4" width="0.85" height="1.3" fill="#9cdcfe"/><rect x="35.1" y="60.4" width="0.8" height="1.3" fill="#d4d4d4"/><rect x="37" y="60.4" width="0.85" height="1.3" fill="#9cdcfe"/><rect x="38" y="60.4" width="0.85" height="1.3" fill="#9cdcfe"/><rect x="39" y="60.4" width="0.85" height="1.3" fill="#9cdcfe"/><rect x="40" y="60.4" width="0.85" height="1.3" fill="#9cdcfe"/><rect x="41" y="60.4" width="0.85" height="1.3" fill="#9cdcfe"/><rect x="42" y="60.4" width="0.85" height="1.3" fill="#9cdcfe"/><rect x="43" y="60.4" width="0.85" height="1.3" fill="#9cdcfe"/><rect x="44" y="60.4" width="0.85" height="1.3" fill="#9cdcfe"/><rect x="45" y="60.4" width="0.85" height="1.3" fill="#9cdcfe"/><rect x="46" y="60.4" width="0.85" height="1.3" fill="#9cdcfe"/><rect x="47.1" y="60.4" width="0.8" height="1.3" fill="#d4d4d4"/><rect x="49.1" y="60.4" width="0.8" height="1.3" fill="#d4d4d4"/><rect x="51.1" y="60.4" width="0.8" height="1.3" fill="#d4d4d4"/><rect x="52" y="60.4" width="0.85" height="1.3" fill="#9cdcfe"/><rect x="53" y="60.4" width="0.85" height="1.3" fill="#9cdcfe"/><rect x="54" y="60.4" width="0.85" height="1.3" fill="#9cdcfe"/><rect x="55" y="60.4" width="0.85" height="1.3" fill="#9cdcfe"/><rect x="56" y="60.4" width="0.85" height="1.3" fill="#9cdcfe"/><rect x="57" y="60.4" width="0.85" height="1.3" fill="#9cdcfe"/><rect x="59.1" y="60.4" width="0.8" height="1.3" fill="#d4d4d4"/><rect x="61" y="60.4" width="0.85" height="1.3" fill="#9cdcfe"/><rect x="62.1" y="60.4" width="0.8" height="1.3" fill="#9cdcfe"/><rect x="63" y="60.4" width="0.85" height="1.3" fill="#9cdcfe"/><rect x="64" y="60.4" width="0.85" height="1.3" fill="#9cdcfe"/><rect x="65" y="60.4" width="0.85" height="1.3" fill="#9cdcfe"/><rect x="66.1" y="60.4" width="0.8" height="1.3" fill="#d4d4d4"/><rect x="68" y="60.4" width="0.85" height="1.3" fill="#d4d4d4"/><rect x="70" y="60.4" width="0.85" height="1.3" fill="#9cdcfe"/><rect x="71" y="60.4" width="0.85" height="1.3" fill="#9cdcfe"/><rect x="72" y="60.4" width="0.85" height="1.3" fill="#9cdcfe"/><rect x="73" y="60.4" width="0.85" height="1.3" fill="#9cdcfe"/><rect x="74" y="60.4" width="0.85" height="1.3" fill="#9cdcfe"/><rect x="75" y="60.4" width="0.85" height="1.3" fill="#9cdcfe"/><rect x="76" y="60.4" width="0.85" height="1.3" fill="#9cdcfe"/><rect x="77" y="60.4" width="0.85" height="1.3" fill="#9cdcfe"/><rect x="78" y="60.4" width="0.85" height="1.3" fill="#9cdcfe"/><rect x="79" y="60.4" width="0.85" height="1.3" fill="#9cdcfe"/><rect x="80" y="60.4" width="0.85" height="1.3" fill="#9cdcfe"/><rect x="81" y="60.4" width="0.85" height="1.3" fill="#9cdcfe"/><rect x="82" y="60.4" width="0.85" height="1.3" fill="#9cdcfe"/><rect x="84.1" y="60.9" width="0.7" height="0.9" fill="#d4d4d4"/><rect x="86.1" y="60.4" width="0.8" height="1.3" fill="#d4d4d4"/><rect x="87" y="60.4" width="0.85" height="1.3" fill="#9cdcfe"/><rect x="88" y="60.4" width="0.85" height="1.3" fill="#9cdcfe"/><rect x="89" y="60.4" width="0.85" height="1.3" fill="#9cdcfe"/><rect x="90" y="60.4" width="0.85" height="1.3" fill="#9cdcfe"/><rect x="91" y="60.4" width="0.85" height="1.3" fill="#9cdcfe"/><rect x="92" y="60.4" width="0.85" height="1.3" fill="#9cdcfe"/><rect x="94.1" y="60.4" width="0.8" height="1.3" fill="#d4d4d4"/><rect x="96" y="60.4" width="0.85" height="1.3" fill="#9cdcfe"/><rect x="97.1" y="60.4" width="0.8" height="1.3" fill="#9cdcfe"/><rect x="98" y="60.4" width="0.85" height="1.3" fill="#9cdcfe"/><rect x="99" y="60.4" width="0.85" height="1.3" fill="#9cdcfe"/><rect x="100" y="60.4" width="0.85" height="1.3" fill="#9cdcfe"/><rect x="101.1" y="60.4" width="0.8" height="1.3" fill="#d4d4d4"/><rect x="102.1" y="60.9" width="0.7" height="0.9" fill="#d4d4d4"/><rect x="12" y="62.4" width="0.85" height="1.3" fill="#c586c0"/><rect x="13" y="62.4" width="0.85" height="1.3" fill="#c586c0"/><rect x="14" y="62.4" width="0.85" height="1.3" fill="#c586c0"/><rect x="15" y="62.4" width="0.85" height="1.3" fill="#c586c0"/><rect x="16" y="62.4" width="0.85" height="1.3" fill="#c586c0"/><rect x="18.1" y="62.4" width="0.8" height="1.3" fill="#d4d4d4"/><rect x="19" y="62.4" width="0.85" height="1.3" fill="#9cdcfe"/><rect x="20" y="62.4" width="0.85" height="1.3" fill="#9cdcfe"/><rect x="21" y="62.4" width="0.85" height="1.3" fill="#9cdcfe"/><rect x="22.1" y="62.4" width="0.8" height="1.3" fill="#9cdcfe"/><rect x="23" y="62.4" width="0.85" height="1.3" fill="#9cdcfe"/><rect x="24" y="62.4" width="0.85" height="1.3" fill="#9cdcfe"/><rect x="25" y="62.4" width="0.85" height="1.3" fill="#9cdcfe"/><rect x="27.1" y="62.4" width="0.8" height="1.3" fill="#d4d4d4"/><rect x="29" y="62.4" width="0.85" height="1.3" fill="#9cdcfe"/><rect x="30" y="62.4" width="0.85" height="1.3" fill="#9cdcfe"/><rect x="31" y="62.4" width="0.85" height="1.3" fill="#9cdcfe"/><rect x="32.1" y="62.4" width="0.8" height="1.3" fill="#d4d4d4"/><rect x="34.1" y="62.4" width="0.8" height="1.3" fill="#d4d4d4"/><rect x="16" y="64.4" width="0.85" height="1.3" fill="#9cdcfe"/><rect x="17" y="64.4" width="0.85" height="1.3" fill="#9cdcfe"/><rect x="18" y="64.4" width="0.85" height="1.3" fill="#9cdcfe"/><rect x="19" y="64.4" width="0.85" height="1.3" fill="#9cdcfe"/><rect x="20" y="64.4" width="0.85" height="1.3" fill="#9cdcfe"/><rect x="21" y="64.4" width="0.85" height="1.3" fill="#9cdcfe"/><rect x="22" y="64.4" width="0.85" height="1.3" fill="#9cdcfe"/><rect x="23.1" y="64.4" width="0.8" height="1.3" fill="#d4d4d4"/><rect x="24" y="64.4" width="0.85" height="1.3" fill="#9cdcfe"/><rect x="25.1" y="64.4" width="0.8" height="1.3" fill="#9cdcfe"/><rect x="26" y="64.4" width="0.85" height="1.3" fill="#9cdcfe"/><rect x="27" y="64.4" width="0.85" height="1.3" fill="#9cdcfe"/><rect x="28" y="64.4" width="0.85" height="1.3" fill="#9cdcfe"/><rect x="29.1" y="64.4" width="0.8" height="1.3" fill="#d4d4d4"/><rect x="31.1" y="64.4" width="0.8" height="1.3" fill="#d4d4d4"/><rect x="33" y="64.4" width="0.85" height="1.3" fill="#9cdcfe"/><rect x="34" y="64.4" width="0.85" height="1.3" fill="#9cdcfe"/><rect x="35" y="64.4" width="0.85" height="1.3" fill="#9cdcfe"/><rect x="36" y="64.4" width="0.85" height="1.3" fill="#9cdcfe"/><rect x="37.1" y="64.4" width="0.8" height="1.3" fill="#d4d4d4"/><rect x="38" y="64.4" width="0.85" height="1.3" fill="#9cdcfe"/><rect x="39" y="64.4" width="0.85" height="1.3" fill="#9cdcfe"/><rect x="40" y="64.4" width="0.85" height="1.3" fill="#9cdcfe"/><rect x="41" y="64.4" width="0.85" height="1.3" fill="#9cdcfe"/><rect x="42" y="64.4" width="0.85" height="1.3" fill="#9cdcfe"/><rect x="43" y="64.4" width="0.85" height="1.3" fill="#9cdcfe"/><rect x="44" y="64.4" width="0.85" height="1.3" fill="#9cdcfe"/><rect x="45" y="64.4" width="0.85" height="1.3" fill="#9cdcfe"/><rect x="46" y="64.4" width="0.85" height="1.3" fill="#9cdcfe"/><rect x="47" y="64.4" width="0.85" height="1.3" fill="#9cdcfe"/><rect x="48.1" y="64.4" width="0.8" height="1.3" fill="#d4d4d4"/><rect x="49.1" y="64.9" width="0.7" height="0.9" fill="#d4d4d4"/><rect x="16.1" y="66.4" width="0.8" height="1.3" fill="#d4d4d4"/><rect x="17.1" y="66.4" width="0.8" height="1.3" fill="#d4d4d4"/><rect x="18" y="66.4" width="0.85" height="1.3" fill="#9cdcfe"/><rect x="19" y="66.4" width="0.85" height="1.3" fill="#9cdcfe"/><rect x="20" y="66.4" width="0.85" height="1.3" fill="#9cdcfe"/><rect x="21" y="66.4" width="0.85" height="1.3" fill="#9cdcfe"/><rect x="22" y="66.4" width="0.85" height="1.3" fill="#9cdcfe"/><rect x="23" y="66.4" width="0.85" height="1.3" fill="#9cdcfe"/><rect x="24" y="66.4" width="0.85" height="1.3" fill="#9cdcfe"/><rect x="25" y="66.4" width="0.85" height="1.3" fill="#9cdcfe"/><rect x="26" y="66.4" width="0.85" height="1.3" fill="#9cdcfe"/><rect x="27" y="66.4" width="0.85" height="1.3" fill="#9cdcfe"/><rect x="28.1" y="66.9" width="0.7" height="0.9" fill="#d4d4d4"/><rect x="16.1" y="68.4" width="0.8" height="1.3" fill="#d4d4d4"/><rect x="17.1" y="68.4" width="0.8" height="1.3" fill="#d4d4d4"/><rect x="18" y="68.4" width="0.85" height="1.3" fill="#9cdcfe"/><rect x="19" y="68.4" width="0.85" height="1.3" fill="#9cdcfe"/><rect x="20" y="68.4" width="0.85" height="1.3" fill="#9cdcfe"/><rect x="21.1" y="68.4" width="0.8" height="1.3" fill="#9cdcfe"/><rect x="22" y="68.4" width="0.85" height="1.3" fill="#9cdcfe"/><rect x="23" y="68.4" width="0.85" height="1.3" fill="#9cdcfe"/><rect x="24" y="68.4" width="0.85" height="1.3" fill="#9cdcfe"/><rect x="25.1" y="68.9" width="0.7" height="0.9" fill="#d4d4d4"/><rect x="16.1" y="70.4" width="0.8" height="1.3" fill="#d4d4d4"/><rect x="17.1" y="70.4" width="0.8" height="1.3" fill="#d4d4d4"/><rect x="18" y="70.4" width="0.85" height="1.3" fill="#9cdcfe"/><rect x="19.1" y="70.4" width="0.8" height="1.3" fill="#9cdcfe"/><rect x="20" y="70.4" width="0.85" height="1.3" fill="#9cdcfe"/><rect x="21" y="70.4" width="0.85" height="1.3" fill="#9cdcfe"/><rect x="22" y="70.4" width="0.85" height="1.3" fill="#9cdcfe"/><rect x="23.1" y="70.9" width="0.7" height="0.9" fill="#d4d4d4"/><rect x="12.1" y="72.4" width="0.8" height="1.3" fill="#d4d4d4"/><rect x="12.1" y="74.4" width="0.8" height="1.3" fill="#608b4e"/><rect x="13.1" y="74.4" width="0.8" height="1.3" fill="#608b4e"/><rect x="14" y="74.4" width="0.85" height="1.3" fill="#608b4e"/><rect x="15" y="74.4" width="0.85" height="1.3" fill="#608b4e"/><rect x="16" y="74.4" width="0.85" height="1.3" fill="#608b4e"/><rect x="17" y="74.4" width="0.85" height="1.3" fill="#608b4e"/><rect x="18" y="74.4" width="0.85" height="1.3" fill="#608b4e"/><rect x="19" y="74.4" width="0.85" height="1.3" fill="#608b4e"/><rect x="20" y="74.4" width="0.85" height="1.3" fill="#608b4e"/><rect x="21" y="74.4" width="0.85" height="1.3" fill="#608b4e"/><rect x="22" y="74.4" width="0.85" height="1.3" fill="#608b4e"/><rect x="23" y="74.4" width="0.85" height="1.3" fill="#608b4e"/><rect x="24" y="74.4" width="0.85" height="1.3" fill="#608b4e"/><rect x="25" y="74.4" width="0.85" height="1.3" fill="#608b4e"/><rect x="26" y="74.4" width="0.85" height="1.3" fill="#608b4e"/><rect x="27" y="74.4" width="0.85" height="1.3" fill="#608b4e"/><rect x="28" y="74.4" width="0.85" height="1.3" fill="#608b4e"/><rect x="29" y="74.4" width="0.85" height="1.3" fill="#608b4e"/><rect x="30" y="74.4" width="0.85" height="1.3" fill="#608b4e"/><rect x="31" y="74.4" width="0.85" height="1.3" fill="#608b4e"/><rect x="32" y="74.4" width="0.85" height="1.3" fill="#608b4e"/><rect x="33" y="74.4" width="0.85" height="1.3" fill="#608b4e"/><rect x="34" y="74.4" width="0.85" height="1.3" fill="#608b4e"/><rect x="35" y="74.4" width="0.85" height="1.3" fill="#608b4e"/><rect x="36" y="74.4" width="0.85" height="1.3" fill="#608b4e"/><rect x="37" y="74.4" width="0.85" height="1.3" fill="#608b4e"/><rect x="38" y="74.4" width="0.85" height="1.3" fill="#608b4e"/><rect x="39" y="74.4" width="0.85" height="1.3" fill="#608b4e"/><rect x="40" y="74.4" width="0.85" height="1.3" fill="#608b4e"/><rect x="41" y="74.4" width="0.85" height="1.3" fill="#608b4e"/><rect x="42" y="74.4" width="0.85" height="1.3" fill="#608b4e"/><rect x="43" y="74.4" width="0.85" height="1.3" fill="#608b4e"/><rect x="44" y="74.4" width="0.85" height="1.3" fill="#608b4e"/><rect x="45" y="74.4" width="0.85" height="1.3" fill="#608b4e"/><rect x="46" y="74.4" width="0.85" height="1.3" fill="#608b4e"/><rect x="12" y="76.4" width="0.85" height="1.3" fill="#c586c0"/><rect x="13" y="76.4" width="0.85" height="1.3" fill="#c586c0"/><rect x="15.1" y="76.4" width="0.8" height="1.3" fill="#d4d4d4"/><rect x="16.1" y="76.4" width="0.8" height="1.3" fill="#d4d4d4"/><rect x="17" y="76.4" width="0.85" height="1.3" fill="#9cdcfe"/><rect x="18" y="76.4" width="0.85" height="1.3" fill="#9cdcfe"/><rect x="19" y="76.4" width="0.85" height="1.3" fill="#9cdcfe"/><rect x="20" y="76.4" width="0.85" height="1.3" fill="#9cdcfe"/><rect x="21" y="76.4" width="0.85" height="1.3" fill="#9cdcfe"/><rect x="22" y="76.4" width="0.85" height="1.3" fill="#9cdcfe"/><rect x="23" y="76.4" width="0.85" height="1.3" fill="#9cdcfe"/><rect x="24.1" y="76.4" width="0.8" height="1.3" fill="#d4d4d4"/><rect x="26" y="76.4" width="0.85" height="1.3" fill="#c586c0"/><rect x="27" y="76.4" width="0.85" height="1.3" fill="#c586c0"/><rect x="28" y="76.4" width="0.85" height="1.3" fill="#c586c0"/><rect x="29" y="76.4" width="0.85" height="1.3" fill="#c586c0"/><rect x="30" y="76.4" width="0.85" height="1.3" fill="#c586c0"/><rect x="31.1" y="76.9" width="0.7" height="0.9" fill="#d4d4d4"/><rect x="12" y="78.4" width="0.85" height="1.3" fill="#c586c0"/><rect x="13" y="78.4" width="0.85" height="1.3" fill="#c586c0"/><rect x="14" y="78.4" width="0.85" height="1.3" fill="#c586c0"/><rect x="15" y="78.4" width="0.85" height="1.3" fill="#c586c0"/><rect x="17.1" y="78.4" width="0.8" height="1.3" fill="#d4d4d4"/><rect x="16" y="80.4" width="0.85" height="1.3" fill="#9cdcfe"/><rect x="17" y="80.4" width="0.85" height="1.3" fill="#9cdcfe"/><rect x="18" y="80.4" width="0.85" height="1.3" fill="#9cdcfe"/><rect x="19.1" y="80.4" width="0.8" height="1.3" fill="#9cdcfe"/><rect x="20" y="80.4" width="0.85" height="1.3" fill="#9cdcfe"/><rect x="21" y="80.4" width="0.85" height="1.3" fill="#9cdcfe"/><rect x="22" y="80.4" width="0.85" height="1.3" fill="#9cdcfe"/><rect x="24.1" y="80.4" width="0.8" height="1.3" fill="#d4d4d4"/><rect x="26" y="80.4" width="0.85" height="1.3" fill="#b5cea8"/><rect x="27.1" y="80.9" width="0.7" height="0.9" fill="#d4d4d4"/><rect x="16" y="82.4" width="0.85" height="1.3" fill="#c586c0"/><rect x="17" y="82.4" width="0.85" height="1.3" fill="#c586c0"/><rect x="19.1" y="82.4" width="0.8" height="1.3" fill="#d4d4d4"/><rect x="20" y="82.4" width="0.85" height="1.3" fill="#9cdcfe"/><rect x="21" y="82.4" width="0.85" height="1.3" fill="#9cdcfe"/><rect x="22" y="82.4" width="0.85" height="1.3" fill="#9cdcfe"/><rect x="23" y="82.4" width="0.85" height="1.3" fill="#9cdcfe"/><rect x="24" y="82.4" width="0.85" height="1.3" fill="#9cdcfe"/><rect x="25" y="82.4" width="0.85" height="1.3" fill="#9cdcfe"/><rect x="26" y="82.4" width="0.85" height="1.3" fill="#9cdcfe"/><rect x="27" y="82.4" width="0.85" height="1.3" fill="#9cdcfe"/><rect x="28" y="82.4" width="0.85" height="1.3" fill="#9cdcfe"/><rect x="29" y="82.4" width="0.85" height="1.3" fill="#9cdcfe"/><rect x="31.1" y="82.4" width="0.8" height="1.3" fill="#d4d4d4"/><rect x="32.1" y="82.4" width="0.8" height="1.3" fill="#d4d4d4"/><rect x="34" y="82.4" width="0.85" height="1.3" fill="#9cdcfe"/><rect x="35" y="82.4" width="0.85" height="1.3" fill="#9cdcfe"/><rect x="36" y="82.4" width="0.85" height="1.3" fill="#9cdcfe"/><rect x="37" y="82.4" width="0.85" height="1.3" fill="#9cdcfe"/><rect x="38.1" y="82.9" width="0.7" height="0.9" fill="#d4d4d4"/><rect x="39" y="82.4" width="0.85" height="1.3" fill="#9cdcfe"/><rect x="40" y="82.4" width="0.85" height="1.3" fill="#9cdcfe"/><rect x="41" y="82.4" width="0.85" height="1.3" fill="#9cdcfe"/><rect x="42" y="82.4" width="0.85" height="1.3" fill="#9cdcfe"/><rect x="43" y="82.4" width="0.85" height="1.3" fill="#9cdcfe"/><rect x="44" y="82.4" width="0.85" height="1.3" fill="#9cdcfe"/><rect x="45.1" y="82.4" width="0.8" height="1.3" fill="#d4d4d4"/><rect x="47.1" y="82.4" width="0.8" height="1.3" fill="#d4d4d4"/><rect x="20" y="84.4" width="0.85" height="1.3" fill="#9cdcfe"/><rect x="21" y="84.4" width="0.85" height="1.3" fill="#9cdcfe"/><rect x="22" y="84.4" width="0.85" height="1.3" fill="#9cdcfe"/><rect x="23" y="84.4" width="0.85" height="1.3" fill="#9cdcfe"/><rect x="24" y="84.4" width="0.85" height="1.3" fill="#9cdcfe"/><rect x="25" y="84.4" width="0.85" height="1.3" fill="#9cdcfe"/><rect x="26" y="84.4" width="0.85" height="1.3" fill="#9cdcfe"/><rect x="27" y="84.4" width="0.85" height="1.3" fill="#9cdcfe"/><rect x="28" y="84.4" width="0.85" height="1.3" fill="#9cdcfe"/><rect x="29" y="84.4" width="0.85" height="1.3" fill="#9cdcfe"/><rect x="31.1" y="84.4" width="0.8" height="1.3" fill="#d4d4d4"/><rect x="33" y="84.4" width="0.85" height="1.3" fill="#b5cea8"/><rect x="34.1" y="84.9" width="0.7" height="0.9" fill="#d4d4d4"/><rect x="16.1" y="86.4" width="0.8" height="1.3" fill="#d4d4d4"/><rect x="12.1" y="88.4" width="0.8" height="1.3" fill="#d4d4d4"/><rect x="8.1" y="90.4" width="0.8" height="1.3" fill="#d4d4d4"/><rect x="8.1" y="92.4" width="0.8" height="1.3" fill="#608b4e"/><rect x="9.1" y="92.4" width="0.8" height="1.3" fill="#608b4e"/><rect x="10" y="92.4" width="0.85" height="1.3" fill="#608b4e"/><rect x="11" y="92.4" width="0.85" height="1.3" fill="#608b4e"/><rect x="12" y="92.4" width="0.85" height="1.3" fill="#608b4e"/><rect x="13" y="92.4" width="0.85" height="1.3" fill="#608b4e"/><rect x="14" y="92.4" width="0.85" height="1.3" fill="#608b4e"/><rect x="15" y="92.4" width="0.85" height="1.3" fill="#608b4e"/><rect x="16" y="92.4" width="0.85" height="1.3" fill="#608b4e"/><rect x="17" y="92.4" width="0.85" height="1.3" fill="#608b4e"/><rect x="18" y="92.4" width="0.85" height="1.3" fill="#608b4e"/><rect x="19" y="92.4" width="0.85" height="1.3" fill="#608b4e"/><rect x="20" y="92.4" width="0.85" height="1.3" fill="#608b4e"/><rect x="8" y="94.4" width="0.85" height="1.3" fill="#c586c0"/><rect x="9" y="94.4" width="0.85" height="1.3" fill="#c586c0"/><rect x="10" y="94.4" width="0.85" height="1.3" fill="#c586c0"/><rect x="11" y="94.4" width="0.85" height="1.3" fill="#c586c0"/><rect x="12" y="94.4" width="0.85" height="1.3" fill="#c586c0"/><rect x="14.1" y="94.4" width="0.8" height="1.3" fill="#d4d4d4"/><rect x="15" y="94.4" width="0.85" height="1.3" fill="#9cdcfe"/><rect x="16.1" y="94.4" width="0.8" height="1.3" fill="#9cdcfe"/><rect x="17" y="94.4" width="0.85" height="1.3" fill="#9cdcfe"/><rect x="18" y="94.4" width="0.85" height="1.3" fill="#9cdcfe"/><rect x="19" y="94.4" width="0.85" height="1.3" fill="#9cdcfe"/><rect x="21.1" y="94.4" width="0.8" height="1.3" fill="#d4d4d4"/><rect x="23" y="94.4" width="0.85" height="1.3" fill="#9cdcfe"/><rect x="24" y="94.4" width="0.85" height="1.3" fill="#9cdcfe"/><rect x="25" y="94.4" width="0.85" height="1.3" fill="#9cdcfe"/><rect x="26" y="94.4" width="0.85" height="1.3" fill="#9cdcfe"/><rect x="27" y="94.4" width="0.85" height="1.3" fill="#9cdcfe"/><rect x="28" y="94.4" width="0.85" height="1.3" fill="#9cdcfe"/><rect x="29.1" y="94.4" width="0.8" height="1.3" fill="#d4d4d4"/><rect x="31.1" y="94.4" width="0.8" height="1.3" fill="#d4d4d4"/><rect x="12" y="96.4" width="0.85" height="1.3" fill="#9cdcfe"/><rect x="13" y="96.4" width="0.85" height="1.3" fill="#9cdcfe"/><rect x="14" y="96.4" width="0.85" height="1.3" fill="#9cdcfe"/><rect x="15" y="96.4" width="0.85" height="1.3" fill="#9cdcfe"/><rect x="16" y="96.4" width="0.85" height="1.3" fill="#9cdcfe"/><rect x="17" y="96.4" width="0.85" height="1.3" fill="#9cdcfe"/><rect x="18" y="96.4" width="0.85" height="1.3" fill="#9cdcfe"/><rect x="19.1" y="96.4" width="0.8" height="1.3" fill="#d4d4d4"/><rect x="20" y="96.4" width="0.85" height="1.3" fill="#9cdcfe"/><rect x="21.1" y="96.4" width="0.8" height="1.3" fill="#9cdcfe"/><rect x="22" y="96.4" width="0.85" height="1.3" fill="#9cdcfe"/><rect x="23" y="96.4" width="0.85" height="1.3" fill="#9cdcfe"/><rect x="24" y="96.4" width="0.85" height="1.3" fill="#9cdcfe"/><rect x="25.1" y="96.4" width="0.8" height="1.3" fill="#d4d4d4"/><rect x="27.1" y="96.4" width="0.8" height="1.3" fill="#d4d4d4"/><rect x="29" y="96.4" width="0.85" height="1.3" fill="#b5cea8"/><rect x="30.1" y="96.9" width="0.7" height="0.9" fill="#d4d4d4"/><rect x="12.1" y="98.4" width="0.8" height="1.3" fill="#d4d4d4"/><rect x="13.1" y="98.4" width="0.8" height="1.3" fill="#d4d4d4"/><rect x="14" y="98.4" width="0.85" height="1.3" fill="#9cdcfe"/><rect x="15.1" y="98.4" width="0.8" height="1.3" fill="#9cdcfe"/><rect x="16" y="98.4" width="0.85" height="1.3" fill="#9cdcfe"/><rect x="17" y="98.4" width="0.85" height="1.3" fill="#9cdcfe"/><rect x="18" y="98.4" width="0.85" height="1.3" fill="#9cdcfe"/><rect x="19.1" y="98.9" width="0.7" height="0.9" fill="#d4d4d4"/><rect x="8.1" y="100.4" width="0.8" height="1.3" fill="#d4d4d4"/><rect x="4.1" y="102.4" width="0.8" height="1.3" fill="#d4d4d4"/><rect x="4" y="106.4" width="0.85" height="1.3" fill="#569cd6"/><rect x="5" y="106.4" width="0.85" height="1.3" fill="#569cd6"/><rect x="6" y="106.4" width="0.85" height="1.3" fill="#569cd6"/><rect x="7" y="106.4" width="0.85" height="1.3" fill="#569cd6"/><rect x="8" y="106.4" width="0.85" height="1.3" fill="#569cd6"/><rect x="9" y="106.4" width="0.85" height="1.3" fill="#569cd6"/><rect x="11" y="106.4" width="0.85" height="1.3" fill="#569cd6"/><rect x="12" y="106.4" width="0.85" height="1.3" fill="#569cd6"/><rect x="13" y="106.4" width="0.85" height="1.3" fill="#569cd6"/><rect x="14" y="106.4" width="0.85" height="1.3" fill="#569cd6"/><rect x="15" y="106.4" width="0.85" height="1.3" fill="#569cd6"/><rect x="16" y="106.4" width="0.85" height="1.3" fill="#569cd6"/><rect x="17" y="106.4" width="0.85" height="1.3" fill="#569cd6"/><rect x="18" y="106.4" width="0.85" height="1.3" fill="#569cd6"/><rect x="20" y="106.4" width="0.85" height="1.3" fill="#dcdcaa"/><rect x="21" y="106.4" width="0.85" height="1.3" fill="#dcdcaa"/><rect x="22" y="106.4" width="0.85" height="1.3" fill="#dcdcaa"/><rect x="23" y="106.4" width="0.85" height="1.3" fill="#dcdcaa"/><rect x="24.1" y="106.4" width="0.8" height="1.3" fill="#d4d4d4"/><rect x="25.1" y="106.4" width="0.8" height="1.3" fill="#d4d4d4"/><rect x="26.1" y="106.9" width="0.7" height="0.9" fill="#d4d4d4"/><rect x="28" y="106.4" width="0.85" height="1.3" fill="#4ec9b0"/><rect x="29" y="106.4" width="0.85" height="1.3" fill="#4ec9b0"/><rect x="30" y="106.4" width="0.85" height="1.3" fill="#4ec9b0"/><rect x="31" y="106.4" width="0.85" height="1.3" fill="#4ec9b0"/><rect x="33.1" y="106.4" width="0.8" height="1.3" fill="#d4d4d4"/><rect x="8" y="108.4" width="0.85" height="1.3" fill="#9cdcfe"/><rect x="9" y="108.4" width="0.85" height="1.3" fill="#9cdcfe"/><rect x="10" y="108.4" width="0.85" height="1.3" fill="#9cdcfe"/><rect x="11" y="108.4" width="0.85" height="1.3" fill="#9cdcfe"/><rect x="12" y="108.4" width="0.85" height="1.3" fill="#9cdcfe"/><rect x="13" y="108.4" width="0.85" height="1.3" fill="#9cdcfe"/><rect x="15.1" y="108.4" width="0.8" height="1.3" fill="#d4d4d4"/><rect x="17" y="108.4" width="0.85" height="1.3" fill="#569cd6"/><rect x="18" y="108.4" width="0.85" height="1.3" fill="#569cd6"/><rect x="19" y="108.4" width="0.85" height="1.3" fill="#569cd6"/><rect x="20" y="108.4" width="0.85" height="1.3" fill="#569cd6"/><rect x="21" y="108.4" width="0.85" height="1.3" fill="#569cd6"/><rect x="22.1" y="108.9" width="0.7" height="0.9" fill="#d4d4d4"/><rect x="8" y="110.4" width="0.85" height="1.3" fill="#9cdcfe"/><rect x="9" y="110.4" width="0.85" height="1.3" fill="#9cdcfe"/><rect x="10" y="110.4" width="0.85" height="1.3" fill="#9cdcfe"/><rect x="11" y="110.4" width="0.85" height="1.3" fill="#9cdcfe"/><rect x="12" y="110.4" width="0.85" height="1.3" fill="#9cdcfe"/><rect x="13" y="110.4" width="0.85" height="1.3" fill="#9cdcfe"/><rect x="14" y="110.4" width="0.85" height="1.3" fill="#9cdcfe"/><rect x="16.1" y="110.4" width="0.8" height="1.3" fill="#d4d4d4"/><rect x="18" y="110.4" width="0.85" height="1.3" fill="#569cd6"/><rect x="19" y="110.4" width="0.85" height="1.3" fill="#569cd6"/><rect x="20" y="110.4" width="0.85" height="1.3" fill="#569cd6"/><rect x="21" y="110.4" width="0.85" height="1.3" fill="#569cd6"/><rect x="22" y="110.4" width="0.85" height="1.3" fill="#569cd6"/><rect x="23.1" y="110.9" width="0.7" height="0.9" fill="#d4d4d4"/><rect x="8" y="112.4" width="0.85" height="1.3" fill="#9cdcfe"/><rect x="9" y="112.4" width="0.85" height="1.3" fill="#9cdcfe"/><rect x="10" y="112.4" width="0.85" height="1.3" fill="#9cdcfe"/><rect x="11.1" y="112.9" width="0.7" height="0.9" fill="#d4d4d4"/><rect x="12" y="112.4" width="0.85" height="1.3" fill="#9cdcfe"/><rect x="13" y="112.4" width="0.85" height="1.3" fill="#9cdcfe"/><rect x="14" y="112.4" width="0.85" height="1.3" fill="#9cdcfe"/><rect x="15" y="112.4" width="0.85" height="1.3" fill="#9cdcfe"/><rect x="16" y="112.4" width="0.85" height="1.3" fill="#9cdcfe"/><rect x="17" y="112.4" width="0.85" height="1.3" fill="#9cdcfe"/><rect x="18.1" y="112.9" width="0.7" height="0.9" fill="#d4d4d4"/><rect x="19" y="112.4" width="0.85" height="1.3" fill="#9cdcfe"/><rect x="20" y="112.4" width="0.85" height="1.3" fill="#9cdcfe"/><rect x="21" y="112.4" width="0.85" height="1.3" fill="#9cdcfe"/><rect x="22" y="112.4" width="0.85" height="1.3" fill="#9cdcfe"/><rect x="23" y="112.4" width="0.85" height="1.3" fill="#9cdcfe"/><rect x="24.1" y="112.9" width="0.7" height="0.9" fill="#d4d4d4"/><rect x="25.1" y="112.4" width="0.8" height="1.3" fill="#9cdcfe"/><rect x="26" y="112.4" width="0.85" height="1.3" fill="#9cdcfe"/><rect x="27" y="112.4" width="0.85" height="1.3" fill="#9cdcfe"/><rect x="28" y="112.4" width="0.85" height="1.3" fill="#9cdcfe"/><rect x="29" y="112.4" width="0.85" height="1.3" fill="#9cdcfe"/><rect x="30" y="112.4" width="0.85" height="1.3" fill="#9cdcfe"/><rect x="31" y="112.4" width="0.85" height="1.3" fill="#9cdcfe"/><rect x="32" y="112.4" width="0.85" height="1.3" fill="#9cdcfe"/><rect x="33" y="112.4" width="0.85" height="1.3" fill="#9cdcfe"/><rect x="34" y="112.4" width="0.85" height="1.3" fill="#9cdcfe"/><rect x="35.1" y="112.4" width="0.8" height="1.3" fill="#d4d4d4"/><rect x="36" y="112.4" width="0.85" height="1.3" fill="#569cd6"/><rect x="37" y="112.4" width="0.85" height="1.3" fill="#569cd6"/><rect x="38" y="112.4" width="0.85" height="1.3" fill="#569cd6"/><rect x="39" y="112.4" width="0.85" height="1.3" fill="#569cd6"/><rect x="40.1" y="112.4" width="0.8" height="1.3" fill="#d4d4d4"/><rect x="41.1" y="112.9" width="0.7" height="0.9" fill="#d4d4d4"/><rect x="8" y="114.4" width="0.85" height="1.3" fill="#9cdcfe"/><rect x="9" y="114.4" width="0.85" height="1.3" fill="#9cdcfe"/><rect x="10" y="114.4" width="0.85" height="1.3" fill="#9cdcfe"/><rect x="11" y="114.4" width="0.85" height="1.3" fill="#9cdcfe"/><rect x="12" y="114.4" width="0.85" height="1.3" fill="#9cdcfe"/><rect x="13" y="114.4" width="0.85" height="1.3" fill="#9cdcfe"/><rect x="14" y="114.4" width="0.85" height="1.3" fill="#9cdcfe"/><rect x="15" y="114.4" width="0.85" height="1.3" fill="#9cdcfe"/><rect x="16" y="114.4" width="0.85" height="1.3" fill="#9cdcfe"/><rect x="17" y="114.4" width="0.85" height="1.3" fill="#9cdcfe"/><rect x="19.1" y="114.4" width="0.8" height="1.3" fill="#d4d4d4"/><rect x="21" y="114.4" width="0.85" height="1.3" fill="#b5cea8"/><rect x="22.1" y="114.9" width="0.7" height="0.9" fill="#d4d4d4"/><rect x="8" y="116.4" width="0.85" height="1.3" fill="#9cdcfe"/><rect x="9" y="116.4" width="0.85" height="1.3" fill="#9cdcfe"/><rect x="10" y="116.4" width="0.85" height="1.3" fill="#9cdcfe"/><rect x="11" y="116.4" width="0.85" height="1.3" fill="#9cdcfe"/><rect x="12" y="116.4" width="0.85" height="1.3" fill="#9cdcfe"/><rect x="13" y="116.4" width="0.85" height="1.3" fill="#9cdcfe"/><rect x="14" y="116.4" width="0.85" height="1.3" fill="#9cdcfe"/><rect x="15" y="116.4" width="0.85" height="1.3" fill="#9cdcfe"/><rect x="17.1" y="116.4" width="0.8" height="1.3" fill="#d4d4d4"/><rect x="19" y="116.4" width="0.85" height="1.3" fill="#569cd6"/><rect x="20" y="116.4" width="0.85" height="1.3" fill="#569cd6"/><rect x="21" y="116.4" width="0.85" height="1.3" fill="#569cd6"/><rect x="22" y="116.4" width="0.85" height="1.3" fill="#569cd6"/><rect x="23" y="116.4" width="0.85" height="1.3" fill="#569cd6"/><rect x="24.1" y="116.9" width="0.7" height="0.9" fill="#d4d4d4"/><rect x="4.1" y="118.4" width="0.8" height="1.3" fill="#d4d4d4"/><rect x="4" y="122.4" width="0.85" height="1.3" fill="#569cd6"/><rect x="5" y="122.4" width="0.85" height="1.3" fill="#569cd6"/><rect x="6" y="122.4" width="0.85" height="1.3" fill="#569cd6"/><rect x="7" y="122.4" width="0.85" height="1.3" fill="#569cd6"/><rect x="8" y="122.4" width="0.85" height="1.3" fill="#569cd6"/><rect x="9" y="122.4" width="0.85" height="1.3" fill="#569cd6"/><rect x="11" y="122.4" width="0.85" height="1.3" fill="#569cd6"/><rect x="12" y="122.4" width="0.85" height="1.3" fill="#569cd6"/><rect x="13" y="122.4" width="0.85" height="1.3" fill="#569cd6"/><rect x="14" y="122.4" width="0.85" height="1.3" fill="#569cd6"/><rect x="15" y="122.4" width="0.85" height="1.3" fill="#569cd6"/><rect x="16" y="122.4" width="0.85" height="1.3" fill="#569cd6"/><rect x="17" y="122.4" width="0.85" height="1.3" fill="#569cd6"/><rect x="18" y="122.4" width="0.85" height="1.3" fill="#569cd6"/><rect x="20" y="122.4" width="0.85" height="1.3" fill="#dcdcaa"/><rect x="21" y="122.4" width="0.85" height="1.3" fill="#dcdcaa"/><rect x="22" y="122.4" width="0.85" height="1.3" fill="#dcdcaa"/><rect x="23" y="122.4" width="0.85" height="1.3" fill="#dcdcaa"/><rect x="24" y="122.4" width="0.85" height="1.3" fill="#dcdcaa"/><rect x="25.1" y="122.4" width="0.8" height="1.3" fill="#d4d4d4"/><rect x="26.1" y="122.4" width="0.8" height="1.3" fill="#d4d4d4"/><rect x="27.1" y="122.9" width="0.7" height="0.9" fill="#d4d4d4"/><rect x="29" y="122.4" width="0.85" height="1.3" fill="#4ec9b0"/><rect x="30" y="122.4" width="0.85" height="1.3" fill="#4ec9b0"/><rect x="31" y="122.4" width="0.85" height="1.3" fill="#4ec9b0"/><rect x="32" y="122.4" width="0.85" height="1.3" fill="#4ec9b0"/><rect x="34.1" y="122.4" width="0.8" height="1.3" fill="#d4d4d4"/><rect x="8" y="124.4" width="0.85" height="1.3" fill="#9cdcfe"/><rect x="9" y="124.4" width="0.85" height="1.3" fill="#9cdcfe"/><rect x="10" y="124.4" width="0.85" height="1.3" fill="#9cdcfe"/><rect x="11" y="124.4" width="0.85" height="1.3" fill="#9cdcfe"/><rect x="12" y="124.4" width="0.85" height="1.3" fill="#9cdcfe"/><rect x="13" y="124.4" width="0.85" height="1.3" fill="#9cdcfe"/><rect x="15.1" y="124.4" width="0.8" height="1.3" fill="#d4d4d4"/><rect x="17" y="124.4" width="0.85" height="1.3" fill="#569cd6"/><rect x="18" y="124.4" width="0.85" height="1.3" fill="#569cd6"/><rect x="19" y="124.4" width="0.85" height="1.3" fill="#569cd6"/><rect x="20" y="124.4" width="0.85" height="1.3" fill="#569cd6"/><rect x="21.1" y="124.9" width="0.7" height="0.9" fill="#d4d4d4"/><rect x="4.1" y="126.4" width="0.8" height="1.3" fill="#d4d4d4"/><rect x="4" y="130.4" width="0.85" height="1.3" fill="#569cd6"/><rect x="5" y="130.4" width="0.85" height="1.3" fill="#569cd6"/><rect x="6" y="130.4" width="0.85" height="1.3" fill="#569cd6"/><rect x="7" y="130.4" width="0.85" height="1.3" fill="#569cd6"/><rect x="8" y="130.4" width="0.85" height="1.3" fill="#569cd6"/><rect x="9" y="130.4" width="0.85" height="1.3" fill="#569cd6"/><rect x="11" y="130.4" width="0.85" height="1.3" fill="#569cd6"/><rect x="12" y="130.4" width="0.85" height="1.3" fill="#569cd6"/><rect x="13" y="130.4" width="0.85" height="1.3" fill="#569cd6"/><rect x="14" y="130.4" width="0.85" height="1.3" fill="#569cd6"/><rect x="15" y="130.4" width="0.85" height="1.3" fill="#569cd6"/><rect x="16" y="130.4" width="0.85" height="1.3" fill="#569cd6"/><rect x="17" y="130.4" width="0.85" height="1.3" fill="#569cd6"/><rect x="18" y="130.4" width="0.85" height="1.3" fill="#569cd6"/><rect x="20" y="130.4" width="0.85" height="1.3" fill="#dcdcaa"/><rect x="21" y="130.4" width="0.85" height="1.3" fill="#dcdcaa"/><rect x="22" y="130.4" width="0.85" height="1.3" fill="#dcdcaa"/><rect x="23" y="130.4" width="0.85" height="1.3" fill="#dcdcaa"/><rect x="24.1" y="130.4" width="0.8" height="1.3" fill="#d4d4d4"/><rect x="25.1" y="130.4" width="0.8" height="1.3" fill="#d4d4d4"/><rect x="26.1" y="130.9" width="0.7" height="0.9" fill="#d4d4d4"/><rect x="28" y="130.4" width="0.85" height="1.3" fill="#4ec9b0"/><rect x="29" y="130.4" width="0.85" height="1.3" fill="#4ec9b0"/><rect x="30" y="130.4" width="0.85" height="1.3" fill="#4ec9b0"/><rect x="31" y="130.4" width="0.85" height="1.3" fill="#4ec9b0"/><rect x="33.1" y="130.4" width="0.8" height="1.3" fill="#d4d4d4"/><rect x="8" y="132.4" width="0.85" height="1.3" fill="#9cdcfe"/><rect x="9" y="132.4" width="0.85" height="1.3" fill="#9cdcfe"/><rect x="10" y="132.4" width="0.85" height="1.3" fill="#9cdcfe"/><rect x="11" y="132.4" width="0.85" height="1.3" fill="#9cdcfe"/><rect x="12" y="132.4" width="0.85" height="1.3" fill="#9cdcfe"/><rect x="13" y="132.4" width="0.85" height="1.3" fill="#9cdcfe"/><rect x="14" y="132.4" width="0.85" height="1.3" fill="#9cdcfe"/><rect x="15" y="132.4" width="0.85" height="1.3" fill="#9cdcfe"/><rect x="16" y="132.4" width="0.85" height="1.3" fill="#9cdcfe"/><rect x="17" y="132.4" width="0.85" height="1.3" fill="#9cdcfe"/><rect x="19.1" y="132.4" width="0.8" height="1.3" fill="#d4d4d4"/><rect x="21" y="132.4" width="0.85" height="1.3" fill="#9cdcfe"/><rect x="22" y="132.4" width="0.85" height="1.3" fill="#9cdcfe"/><rect x="23" y="132.4" width="0.85" height="1.3" fill="#9cdcfe"/><rect x="24" y="132.4" width="0.85" height="1.3" fill="#9cdcfe"/><rect x="25.1" y="132.9" width="0.7" height="0.9" fill="#d4d4d4"/><rect x="26" y="132.4" width="0.85" height="1.3" fill="#9cdcfe"/><rect x="27" y="132.4" width="0.85" height="1.3" fill="#9cdcfe"/><rect x="28" y="132.4" width="0.85" height="1.3" fill="#9cdcfe"/><rect x="29" y="132.4" width="0.85" height="1.3" fill="#9cdcfe"/><rect x="30" y="132.4" width="0.85" height="1.3" fill="#9cdcfe"/><rect x="31" y="132.4" width="0.85" height="1.3" fill="#9cdcfe"/><rect x="32.1" y="132.9" width="0.7" height="0.9" fill="#d4d4d4"/><rect x="4.1" y="134.4" width="0.8" height="1.3" fill="#d4d4d4"/><rect x="4" y="138.4" width="0.85" height="1.3" fill="#569cd6"/><rect x="5" y="138.4" width="0.85" height="1.3" fill="#569cd6"/><rect x="6" y="138.4" width="0.85" height="1.3" fill="#569cd6"/><rect x="7" y="138.4" width="0.85" height="1.3" fill="#569cd6"/><rect x="8" y="138.4" width="0.85" height="1.3" fill="#569cd6"/><rect x="9" y="138.4" width="0.85" height="1.3" fill="#569cd6"/><rect x="11" y="138.4" width="0.85" height="1.3" fill="#569cd6"/><rect x="12" y="138.4" width="0.85" height="1.3" fill="#569cd6"/><rect x="13" y="138.4" width="0.85" height="1.3" fill="#569cd6"/><rect x="15" y="138.4" width="0.85" height="1.3" fill="#9cdcfe"/><rect x="16" y="138.4" width="0.85" height="1.3" fill="#9cdcfe"/><rect x="17" y="138.4" width="0.85" height="1.3" fill="#9cdcfe"/><rect x="18" y="138.4" width="0.85" height="1.3" fill="#9cdcfe"/><rect x="19" y="138.4" width="0.85" height="1.3" fill="#9cdcfe"/><rect x="20" y="138.4" width="0.85" height="1.3" fill="#9cdcfe"/><rect x="21.1" y="138.4" width="0.8" height="1.3" fill="#d4d4d4"/><rect x="22" y="138.4" width="0.85" height="1.3" fill="#569cd6"/><rect x="23" y="138.4" width="0.85" height="1.3" fill="#569cd6"/><rect x="24" y="138.4" width="0.85" height="1.3" fill="#569cd6"/><rect x="25.1" y="138.9" width="0.7" height="0.9" fill="#d4d4d4"/><rect x="27" y="138.4" width="0.85" height="1.3" fill="#569cd6"/><rect x="28" y="138.4" width="0.85" height="1.3" fill="#569cd6"/><rect x="29" y="138.4" width="0.85" height="1.3" fill="#569cd6"/><rect x="30" y="138.4" width="0.85" height="1.3" fill="#569cd6"/><rect x="31" y="138.4" width="0.85" height="1.3" fill="#569cd6"/><rect x="32.1" y="138.4" width="0.8" height="1.3" fill="#d4d4d4"/><rect x="33.1" y="138.9" width="0.7" height="0.9" fill="#d4d4d4"/><rect x="35" y="138.4" width="0.85" height="1.3" fill="#4ec9b0"/><rect x="36" y="138.4" width="0.85" height="1.3" fill="#4ec9b0"/><rect x="37" y="138.4" width="0.85" height="1.3" fill="#4ec9b0"/><rect x="38" y="138.4" width="0.85" height="1.3" fill="#4ec9b0"/><rect x="39" y="138.4" width="0.85" height="1.3" fill="#4ec9b0"/><rect x="40.1" y="138.9" width="0.7" height="0.9" fill="#d4d4d4"/><rect x="42.1" y="138.4" width="0.8" height="1.3" fill="#608b4e"/><rect x="43.1" y="138.4" width="0.8" height="1.3" fill="#608b4e"/><rect x="44" y="138.4" width="0.85" height="1.3" fill="#608b4e"/><rect x="45" y="138.4" width="0.85" height="1.3" fill="#608b4e"/><rect x="46" y="138.4" width="0.85" height="1.3" fill="#608b4e"/><rect x="47" y="138.4" width="0.85" height="1.3" fill="#608b4e"/><rect x="48" y="138.4" width="0.85" height="1.3" fill="#608b4e"/><rect x="49" y="138.4" width="0.85" height="1.3" fill="#608b4e"/><rect x="50" y="138.4" width="0.85" height="1.3" fill="#608b4e"/><rect x="51" y="138.4" width="0.85" height="1.3" fill="#608b4e"/><rect x="4" y="140.4" width="0.85" height="1.3" fill="#569cd6"/><rect x="5" y="140.4" width="0.85" height="1.3" fill="#569cd6"/><rect x="6" y="140.4" width="0.85" height="1.3" fill="#569cd6"/><rect x="7" y="140.4" width="0.85" height="1.3" fill="#569cd6"/><rect x="8" y="140.4" width="0.85" height="1.3" fill="#569cd6"/><rect x="9" y="140.4" width="0.85" height="1.3" fill="#569cd6"/><rect x="10" y="140.4" width="0.85" height="1.3" fill="#569cd6"/><rect x="12" y="140.4" width="0.85" height="1.3" fill="#569cd6"/><rect x="13" y="140.4" width="0.85" height="1.3" fill="#569cd6"/><rect x="14" y="140.4" width="0.85" height="1.3" fill="#569cd6"/><rect x="15" y="140.4" width="0.85" height="1.3" fill="#569cd6"/><rect x="16" y="140.4" width="0.85" height="1.3" fill="#569cd6"/><rect x="17" y="140.4" width="0.85" height="1.3" fill="#569cd6"/><rect x="18" y="140.4" width="0.85" height="1.3" fill="#569cd6"/><rect x="19" y="140.4" width="0.85" height="1.3" fill="#569cd6"/><rect x="21" y="140.4" width="0.85" height="1.3" fill="#dcdcaa"/><rect x="22" y="140.4" width="0.85" height="1.3" fill="#dcdcaa"/><rect x="23" y="140.4" width="0.85" height="1.3" fill="#dcdcaa"/><rect x="24.1" y="140.4" width="0.8" height="1.3" fill="#dcdcaa"/><rect x="25" y="140.4" width="0.85" height="1.3" fill="#dcdcaa"/><rect x="26" y="140.4" width="0.85" height="1.3" fill="#dcdcaa"/><rect x="27" y="140.4" width="0.85" height="1.3" fill="#dcdcaa"/><rect x="28" y="140.4" width="0.85" height="1.3" fill="#dcdcaa"/><rect x="29" y="140.4" width="0.85" height="1.3" fill="#dcdcaa"/><rect x="30" y="140.4" width="0.85" height="1.3" fill="#dcdcaa"/><rect x="31.1" y="140.4" width="0.8" height="1.3" fill="#d4d4d4"/><rect x="32.1" y="140.4" width="0.8" height="1.3" fill="#d4d4d4"/><rect x="33.1" y="140.9" width="0.7" height="0.9" fill="#d4d4d4"/><rect x="35" y="140.4" width="0.85" height="1.3" fill="#4ec9b0"/><rect x="36" y="140.4" width="0.85" height="1.3" fill="#4ec9b0"/><rect x="37" y="140.4" width="0.85" height="1.3" fill="#4ec9b0"/><rect x="38" y="140.4" width="0.85" height="1.3" fill="#4ec9b0"/><rect x="39" y="140.4" width="0.85" height="1.3" fill="#4ec9b0"/><rect x="41.1" y="140.4" width="0.8" height="1.3" fill="#d4d4d4"/><rect x="8" y="142.4" width="0.85" height="1.3" fill="#c586c0"/><rect x="9" y="142.4" width="0.85" height="1.3" fill="#c586c0"/><rect x="10" y="142.4" width="0.85" height="1.3" fill="#c586c0"/><rect x="11" y="142.4" width="0.85" height="1.3" fill="#c586c0"/><rect x="12" y="142.4" width="0.85" height="1.3" fill="#c586c0"/><rect x="13" y="142.4" width="0.85" height="1.3" fill="#c586c0"/><rect x="15" y="142.4" width="0.85" height="1.3" fill="#9cdcfe"/><rect x="16" y="142.4" width="0.85" height="1.3" fill="#9cdcfe"/><rect x="17" y="142.4" width="0.85" height="1.3" fill="#9cdcfe"/><rect x="18" y="142.4" width="0.85" height="1.3" fill="#9cdcfe"/><rect x="19.1" y="142.9" width="0.7" height="0.9" fill="#d4d4d4"/><rect x="20" y="142.4" width="0.85" height="1.3" fill="#9cdcfe"/><rect x="21" y="142.4" width="0.85" height="1.3" fill="#9cdcfe"/><rect x="22" y="142.4" width="0.85" height="1.3" fill="#9cdcfe"/><rect x="23" y="142.4" width="0.85" height="1.3" fill="#9cdcfe"/><rect x="24" y="142.4" width="0.85" height="1.3" fill="#9cdcfe"/><rect x="25" y="142.4" width="0.85" height="1.3" fill="#9cdcfe"/><rect x="27.1" y="142.4" width="0.8" height="1.3" fill="#d4d4d4"/><rect x="29" y="142.4" width="0.85" height="1.3" fill="#b5cea8"/><rect x="30" y="142.4" width="0.85" height="1.3" fill="#b5cea8"/><rect x="31" y="142.4" width="0.85" height="1.3" fill="#b5cea8"/><rect x="32" y="142.4" width="0.85" height="1.3" fill="#b5cea8"/><rect x="33" y="142.4" width="0.85" height="1.3" fill="#b5cea8"/><rect x="35.1" y="142.4" width="0.8" height="1.3" fill="#d4d4d4"/><rect x="37" y="142.4" width="0.85" height="1.3" fill="#b5cea8"/><rect x="38.1" y="142.9" width="0.7" height="0.9" fill="#d4d4d4"/><rect x="40.1" y="142.4" width="0.8" height="1.3" fill="#608b4e"/><rect x="41.1" y="142.4" width="0.8" height="1.3" fill="#608b4e"/><rect x="42" y="142.4" width="0.85" height="1.3" fill="#608b4e"/><rect x="43" y="142.4" width="0.85" height="1.3" fill="#608b4e"/><rect x="44" y="142.4" width="0.85" height="1.3" fill="#608b4e"/><rect x="45.1" y="142.9" width="0.7" height="0.9" fill="#608b4e"/><rect x="46" y="142.4" width="0.85" height="1.3" fill="#608b4e"/><rect x="47" y="142.4" width="0.85" height="1.3" fill="#608b4e"/><rect x="48" y="142.4" width="0.85" height="1.3" fill="#608b4e"/><rect x="49" y="142.4" width="0.85" height="1.3" fill="#608b4e"/><rect x="50" y="142.4" width="0.85" height="1.3" fill="#608b4e"/><rect x="51" y="142.4" width="0.85" height="1.3" fill="#608b4e"/><rect x="52" y="142.4" width="0.85" height="1.3" fill="#608b4e"/><rect x="53" y="142.4" width="0.85" height="1.3" fill="#608b4e"/><rect x="54" y="142.4" width="0.85" height="1.3" fill="#608b4e"/><rect x="55" y="142.4" width="0.85" height="1.3" fill="#608b4e"/><rect x="56" y="142.4" width="0.85" height="1.3" fill="#608b4e"/><rect x="57" y="142.4" width="0.85" height="1.3" fill="#608b4e"/><rect x="58" y="142.4" width="0.85" height="1.3" fill="#608b4e"/><rect x="59" y="142.4" width="0.85" height="1.3" fill="#608b4e"/><rect x="60" y="142.4" width="0.85" height="1.3" fill="#608b4e"/><rect x="4.1" y="144.4" width="0.8" height="1.3" fill="#d4d4d4"/><rect x="4" y="148.4" width="0.85" height="1.3" fill="#569cd6"/><rect x="5" y="148.4" width="0.85" height="1.3" fill="#569cd6"/><rect x="6" y="148.4" width="0.85" height="1.3" fill="#569cd6"/><rect x="7" y="148.4" width="0.85" height="1.3" fill="#569cd6"/><rect x="8" y="148.4" width="0.85" height="1.3" fill="#569cd6"/><rect x="9" y="148.4" width="0.85" height="1.3" fill="#569cd6"/><rect x="11" y="148.4" width="0.85" height="1.3" fill="#569cd6"/><rect x="12" y="148.4" width="0.85" height="1.3" fill="#569cd6"/><rect x="13" y="148.4" width="0.85" height="1.3" fill="#569cd6"/><rect x="15" y="148.4" width="0.85" height="1.3" fill="#9cdcfe"/><rect x="16" y="148.4" width="0.85" height="1.3" fill="#9cdcfe"/><rect x="17" y="148.4" width="0.85" height="1.3" fill="#9cdcfe"/><rect x="18" y="148.4" width="0.85" height="1.3" fill="#9cdcfe"/><rect x="19" y="148.4" width="0.85" height="1.3" fill="#9cdcfe"/><rect x="20" y="148.4" width="0.85" height="1.3" fill="#9cdcfe"/><rect x="21" y="148.4" width="0.85" height="1.3" fill="#9cdcfe"/><rect x="22" y="148.4" width="0.85" height="1.3" fill="#9cdcfe"/><rect x="23.1" y="148.4" width="0.8" height="1.3" fill="#d4d4d4"/><rect x="24" y="148.4" width="0.85" height="1.3" fill="#569cd6"/><rect x="25" y="148.4" width="0.85" height="1.3" fill="#569cd6"/><rect x="26" y="148.4" width="0.85" height="1.3" fill="#569cd6"/><rect x="27.1" y="148.9" width="0.7" height="0.9" fill="#d4d4d4"/><rect x="29" y="148.4" width="0.85" height="1.3" fill="#569cd6"/><rect x="30" y="148.4" width="0.85" height="1.3" fill="#569cd6"/><rect x="31" y="148.4" width="0.85" height="1.3" fill="#569cd6"/><rect x="32" y="148.4" width="0.85" height="1.3" fill="#569cd6"/><rect x="33" y="148.4" width="0.85" height="1.3" fill="#569cd6"/><rect x="34.1" y="148.4" width="0.8" height="1.3" fill="#d4d4d4"/><rect x="35.1" y="148.9" width="0.7" height="0.9" fill="#d4d4d4"/><rect x="37" y="148.4" width="0.85" height="1.3" fill="#4ec9b0"/><rect x="38" y="148.4" width="0.85" height="1.3" fill="#4ec9b0"/><rect x="39" y="148.4" width="0.85" height="1.3" fill="#4ec9b0"/><rect x="40" y="148.4" width="0.85" height="1.3" fill="#4ec9b0"/><rect x="41" y="148.4" width="0.85" height="1.3" fill="#4ec9b0"/><rect x="42.1" y="148.9" width="0.7" height="0.9" fill="#d4d4d4"/><rect x="44.1" y="148.4" width="0.8" height="1.3" fill="#608b4e"/><rect x="45.1" y="148.4" width="0.8" height="1.3" fill="#608b4e"/><rect x="46" y="148.4" width="0.85" height="1.3" fill="#608b4e"/><rect x="47" y="148.4" width="0.85" height="1.3" fill="#608b4e"/><rect x="48" y="148.4" width="0.85" height="1.3" fill="#608b4e"/><rect x="49" y="148.4" width="0.85" height="1.3" fill="#608b4e"/><rect x="50" y="148.4" width="0.85" height="1.3" fill="#608b4e"/><rect x="51" y="148.4" width="0.85" height="1.3" fill="#608b4e"/><rect x="52" y="148.4" width="0.85" height="1.3" fill="#608b4e"/><rect x="53" y="148.4" width="0.85" height="1.3" fill="#608b4e"/><rect x="4" y="150.4" width="0.85" height="1.3" fill="#569cd6"/><rect x="5" y="150.4" width="0.85" height="1.3" fill="#569cd6"/><rect x="6" y="150.4" width="0.85" height="1.3" fill="#569cd6"/><rect x="7" y="150.4" width="0.85" height="1.3" fill="#569cd6"/><rect x="8" y="150.4" width="0.85" height="1.3" fill="#569cd6"/><rect x="9" y="150.4" width="0.85" height="1.3" fill="#569cd6"/><rect x="10" y="150.4" width="0.85" height="1.3" fill="#569cd6"/><rect x="12" y="150.4" width="0.85" height="1.3" fill="#569cd6"/><rect x="13" y="150.4" width="0.85" height="1.3" fill="#569cd6"/><rect x="14" y="150.4" width="0.85" height="1.3" fill="#569cd6"/><rect x="15" y="150.4" width="0.85" height="1.3" fill="#569cd6"/><rect x="16" y="150.4" width="0.85" height="1.3" fill="#569cd6"/><rect x="17" y="150.4" width="0.85" height="1.3" fill="#569cd6"/><rect x="18" y="150.4" width="0.85" height="1.3" fill="#569cd6"/><rect x="19" y="150.4" width="0.85" height="1.3" fill="#569cd6"/><rect x="21" y="150.4" width="0.85" height="1.3" fill="#dcdcaa"/><rect x="22" y="150.4" width="0.85" height="1.3" fill="#dcdcaa"/><rect x="23" y="150.4" width="0.85" height="1.3" fill="#dcdcaa"/><rect x="24.1" y="150.4" width="0.8" height="1.3" fill="#dcdcaa"/><rect x="25" y="150.4" width="0.85" height="1.3" fill="#dcdcaa"/><rect x="26" y="150.4" width="0.85" height="1.3" fill="#dcdcaa"/><rect x="27" y="150.4" width="0.85" height="1.3" fill="#dcdcaa"/><rect x="28" y="150.4" width="0.85" height="1.3" fill="#dcdcaa"/><rect x="29" y="150.4" width="0.85" height="1.3" fill="#dcdcaa"/><rect x="30" y="150.4" width="0.85" height="1.3" fill="#dcdcaa"/><rect x="31" y="150.4" width="0.85" height="1.3" fill="#dcdcaa"/><rect x="32" y="150.4" width="0.85" height="1.3" fill="#dcdcaa"/><rect x="33.1" y="150.4" width="0.8" height="1.3" fill="#d4d4d4"/><rect x="34.1" y="150.4" width="0.8" height="1.3" fill="#d4d4d4"/><rect x="35.1" y="150.9" width="0.7" height="0.9" fill="#d4d4d4"/><rect x="37" y="150.4" width="0.85" height="1.3" fill="#4ec9b0"/><rect x="38" y="150.4" width="0.85" height="1.3" fill="#4ec9b0"/><rect x="39" y="150.4" width="0.85" height="1.3" fill="#4ec9b0"/><rect x="40" y="150.4" width="0.85" height="1.3" fill="#4ec9b0"/><rect x="41" y="150.4" width="0.85" height="1.3" fill="#4ec9b0"/><rect x="43.1" y="150.4" width="0.8" height="1.3" fill="#d4d4d4"/><rect x="8" y="152.4" width="0.85" height="1.3" fill="#c586c0"/><rect x="9" y="152.4" width="0.85" height="1.3" fill="#c586c0"/><rect x="10" y="152.4" width="0.85" height="1.3" fill="#c586c0"/><rect x="11" y="152.4" width="0.85" height="1.3" fill="#c586c0"/><rect x="12" y="152.4" width="0.85" height="1.3" fill="#c586c0"/><rect x="13" y="152.4" width="0.85" height="1.3" fill="#c586c0"/><rect x="15" y="152.4" width="0.85" height="1.3" fill="#9cdcfe"/><rect x="16" y="152.4" width="0.85" height="1.3" fill="#9cdcfe"/><rect x="17" y="152.4" width="0.85" height="1.3" fill="#9cdcfe"/><rect x="18" y="152.4" width="0.85" height="1.3" fill="#9cdcfe"/><rect x="19" y="152.4" width="0.85" height="1.3" fill="#9cdcfe"/><rect x="20" y="152.4" width="0.85" height="1.3" fill="#9cdcfe"/><rect x="21" y="152.4" width="0.85" height="1.3" fill="#9cdcfe"/><rect x="22" y="152.4" width="0.85" height="1.3" fill="#9cdcfe"/><rect x="23" y="152.4" width="0.85" height="1.3" fill="#9cdcfe"/><rect x="24" y="152.4" width="0.85" height="1.3" fill="#9cdcfe"/><rect x="26.1" y="152.4" width="0.8" height="1.3" fill="#d4d4d4"/><rect x="28" y="152.4" width="0.85" height="1.3" fill="#b5cea8"/><rect x="29" y="152.4" width="0.85" height="1.3" fill="#b5cea8"/><rect x="30" y="152.4" width="0.85" height="1.3" fill="#b5cea8"/><rect x="31" y="152.4" width="0.85" height="1.3" fill="#b5cea8"/><rect x="32" y="152.4" width="0.85" height="1.3" fill="#b5cea8"/><rect x="34.1" y="152.4" width="0.8" height="1.3" fill="#d4d4d4"/><rect x="36" y="152.4" width="0.85" height="1.3" fill="#b5cea8"/><rect x="37.1" y="152.9" width="0.7" height="0.9" fill="#d4d4d4"/><rect x="4.1" y="154.4" width="0.8" height="1.3" fill="#d4d4d4"/><rect x="4" y="160.4" width="0.85" height="1.3" fill="#569cd6"/><rect x="5" y="160.4" width="0.85" height="1.3" fill="#569cd6"/><rect x="6" y="160.4" width="0.85" height="1.3" fill="#569cd6"/><rect x="7" y="160.4" width="0.85" height="1.3" fill="#569cd6"/><rect x="8" y="160.4" width="0.85" height="1.3" fill="#569cd6"/><rect x="9" y="160.4" width="0.85" height="1.3" fill="#569cd6"/><rect x="11" y="160.4" width="0.85" height="1.3" fill="#569cd6"/><rect x="12" y="160.4" width="0.85" height="1.3" fill="#569cd6"/><rect x="13" y="160.4" width="0.85" height="1.3" fill="#569cd6"/><rect x="15" y="160.4" width="0.85" height="1.3" fill="#9cdcfe"/><rect x="16" y="160.4" width="0.85" height="1.3" fill="#9cdcfe"/><rect x="17" y="160.4" width="0.85" height="1.3" fill="#9cdcfe"/><rect x="18" y="160.4" width="0.85" height="1.3" fill="#9cdcfe"/><rect x="19" y="160.4" width="0.85" height="1.3" fill="#9cdcfe"/><rect x="20" y="160.4" width="0.85" height="1.3" fill="#9cdcfe"/><rect x="21.1" y="160.4" width="0.8" height="1.3" fill="#d4d4d4"/><rect x="22" y="160.4" width="0.85" height="1.3" fill="#569cd6"/><rect x="23" y="160.4" width="0.85" height="1.3" fill="#569cd6"/><rect x="24" y="160.4" width="0.85" height="1.3" fill="#569cd6"/><rect x="25.1" y="160.9" width="0.7" height="0.9" fill="#d4d4d4"/><rect x="27" y="160.4" width="0.85" height="1.3" fill="#569cd6"/><rect x="28" y="160.4" width="0.85" height="1.3" fill="#569cd6"/><rect x="29" y="160.4" width="0.85" height="1.3" fill="#569cd6"/><rect x="30.1" y="160.4" width="0.8" height="1.3" fill="#d4d4d4"/><rect x="31.1" y="160.9" width="0.7" height="0.9" fill="#d4d4d4"/><rect x="33" y="160.4" width="0.85" height="1.3" fill="#4ec9b0"/><rect x="34" y="160.4" width="0.85" height="1.3" fill="#4ec9b0"/><rect x="35" y="160.4" width="0.85" height="1.3" fill="#4ec9b0"/><rect x="36" y="160.4" width="0.85" height="1.3" fill="#4ec9b0"/><rect x="37" y="160.4" width="0.85" height="1.3" fill="#4ec9b0"/><rect x="38.1" y="160.9" width="0.7" height="0.9" fill="#d4d4d4"/><rect x="4" y="162.4" width="0.85" height="1.3" fill="#569cd6"/><rect x="5" y="162.4" width="0.85" height="1.3" fill="#569cd6"/><rect x="6" y="162.4" width="0.85" height="1.3" fill="#569cd6"/><rect x="7" y="162.4" width="0.85" height="1.3" fill="#569cd6"/><rect x="8" y="162.4" width="0.85" height="1.3" fill="#569cd6"/><rect x="9" y="162.4" width="0.85" height="1.3" fill="#569cd6"/><rect x="10" y="162.4" width="0.85" height="1.3" fill="#569cd6"/><rect x="12" y="162.4" width="0.85" height="1.3" fill="#569cd6"/><rect x="13" y="162.4" width="0.85" height="1.3" fill="#569cd6"/><rect x="14" y="162.4" width="0.85" height="1.3" fill="#569cd6"/><rect x="15" y="162.4" width="0.85" height="1.3" fill="#569cd6"/><rect x="16" y="162.4" width="0.85" height="1.3" fill="#569cd6"/><rect x="17" y="162.4" width="0.85" height="1.3" fill="#569cd6"/><rect x="18" y="162.4" width="0.85" height="1.3" fill="#569cd6"/><rect x="19" y="162.4" width="0.85" height="1.3" fill="#569cd6"/><rect x="21" y="162.4" width="0.85" height="1.3" fill="#dcdcaa"/><rect x="22" y="162.4" width="0.85" height="1.3" fill="#dcdcaa"/><rect x="23" y="162.4" width="0.85" height="1.3" fill="#dcdcaa"/><rect x="24.1" y="162.4" width="0.8" height="1.3" fill="#dcdcaa"/><rect x="25" y="162.4" width="0.85" height="1.3" fill="#dcdcaa"/><rect x="26" y="162.4" width="0.85" height="1.3" fill="#dcdcaa"/><rect x="27" y="162.4" width="0.85" height="1.3" fill="#dcdcaa"/><rect x="28" y="162.4" width="0.85" height="1.3" fill="#dcdcaa"/><rect x="29" y="162.4" width="0.85" height="1.3" fill="#dcdcaa"/><rect x="30" y="162.4" width="0.85" height="1.3" fill="#dcdcaa"/><rect x="31.1" y="162.4" width="0.8" height="1.3" fill="#d4d4d4"/><rect x="32.1" y="162.4" width="0.8" height="1.3" fill="#d4d4d4"/><rect x="33.1" y="162.9" width="0.7" height="0.9" fill="#d4d4d4"/><rect x="35" y="162.4" width="0.85" height="1.3" fill="#4ec9b0"/><rect x="36" y="162.4" width="0.85" height="1.3" fill="#4ec9b0"/><rect x="37" y="162.4" width="0.85" height="1.3" fill="#4ec9b0"/><rect x="38" y="162.4" width="0.85" height="1.3" fill="#4ec9b0"/><rect x="39" y="162.4" width="0.85" height="1.3" fill="#4ec9b0"/><rect x="41.1" y="162.4" width="0.8" height="1.3" fill="#d4d4d4"/><rect x="8" y="164.4" width="0.85" height="1.3" fill="#c586c0"/><rect x="9" y="164.4" width="0.85" height="1.3" fill="#c586c0"/><rect x="10" y="164.4" width="0.85" height="1.3" fill="#c586c0"/><rect x="11" y="164.4" width="0.85" height="1.3" fill="#c586c0"/><rect x="12" y="164.4" width="0.85" height="1.3" fill="#c586c0"/><rect x="13" y="164.4" width="0.85" height="1.3" fill="#c586c0"/><rect x="15" y="164.4" width="0.85" height="1.3" fill="#9cdcfe"/><rect x="16" y="164.4" width="0.85" height="1.3" fill="#9cdcfe"/><rect x="17" y="164.4" width="0.85" height="1.3" fill="#9cdcfe"/><rect x="18" y="164.4" width="0.85" height="1.3" fill="#9cdcfe"/><rect x="19" y="164.4" width="0.85" height="1.3" fill="#9cdcfe"/><rect x="20" y="164.4" width="0.85" height="1.3" fill="#9cdcfe"/><rect x="21" y="164.4" width="0.85" height="1.3" fill="#9cdcfe"/><rect x="22" y="164.4" width="0.85" height="1.3" fill="#9cdcfe"/><rect x="23.1" y="164.9" width="0.7" height="0.9" fill="#d4d4d4"/><rect x="4.1" y="166.4" width="0.8" height="1.3" fill="#d4d4d4"/><rect x="4" y="170.4" width="0.85" height="1.3" fill="#569cd6"/><rect x="5" y="170.4" width="0.85" height="1.3" fill="#569cd6"/><rect x="6" y="170.4" width="0.85" height="1.3" fill="#569cd6"/><rect x="7" y="170.4" width="0.85" height="1.3" fill="#569cd6"/><rect x="8" y="170.4" width="0.85" height="1.3" fill="#569cd6"/><rect x="9" y="170.4" width="0.85" height="1.3" fill="#569cd6"/><rect x="10" y="170.4" width="0.85" height="1.3" fill="#569cd6"/><rect x="12" y="170.4" width="0.85" height="1.3" fill="#569cd6"/><rect x="13" y="170.4" width="0.85" height="1.3" fill="#569cd6"/><rect x="14" y="170.4" width="0.85" height="1.3" fill="#569cd6"/><rect x="15" y="170.4" width="0.85" height="1.3" fill="#569cd6"/><rect x="16" y="170.4" width="0.85" height="1.3" fill="#569cd6"/><rect x="17" y="170.4" width="0.85" height="1.3" fill="#569cd6"/><rect x="18" y="170.4" width="0.85" height="1.3" fill="#569cd6"/><rect x="19" y="170.4" width="0.85" height="1.3" fill="#569cd6"/><rect x="21" y="170.4" width="0.85" height="1.3" fill="#dcdcaa"/><rect x="22" y="170.4" width="0.85" height="1.3" fill="#dcdcaa"/><rect x="23" y="170.4" width="0.85" height="1.3" fill="#dcdcaa"/><rect x="24.1" y="170.4" width="0.8" height="1.3" fill="#dcdcaa"/><rect x="25" y="170.4" width="0.85" height="1.3" fill="#dcdcaa"/><rect x="26" y="170.4" width="0.85" height="1.3" fill="#dcdcaa"/><rect x="27" y="170.4" width="0.85" height="1.3" fill="#dcdcaa"/><rect x="28" y="170.4" width="0.85" height="1.3" fill="#dcdcaa"/><rect x="29" y="170.4" width="0.85" height="1.3" fill="#dcdcaa"/><rect x="30" y="170.4" width="0.85" height="1.3" fill="#dcdcaa"/><rect x="31.1" y="170.4" width="0.8" height="1.3" fill="#d4d4d4"/><rect x="32" y="170.4" width="0.85" height="1.3" fill="#9cdcfe"/><rect x="33" y="170.4" width="0.85" height="1.3" fill="#9cdcfe"/><rect x="34" y="170.4" width="0.85" height="1.3" fill="#9cdcfe"/><rect x="35" y="170.4" width="0.85" height="1.3" fill="#9cdcfe"/><rect x="36" y="170.4" width="0.85" height="1.3" fill="#9cdcfe"/><rect x="37.1" y="170.9" width="0.7" height="0.9" fill="#d4d4d4"/><rect x="39" y="170.4" width="0.85" height="1.3" fill="#4ec9b0"/><rect x="40" y="170.4" width="0.85" height="1.3" fill="#4ec9b0"/><rect x="41" y="170.4" width="0.85" height="1.3" fill="#4ec9b0"/><rect x="42" y="170.4" width="0.85" height="1.3" fill="#4ec9b0"/><rect x="43" y="170.4" width="0.85" height="1.3" fill="#4ec9b0"/><rect x="44.1" y="170.4" width="0.8" height="1.3" fill="#d4d4d4"/><rect x="45.1" y="170.9" width="0.7" height="0.9" fill="#d4d4d4"/><rect x="47" y="170.4" width="0.85" height="1.3" fill="#4ec9b0"/><rect x="48" y="170.4" width="0.85" height="1.3" fill="#4ec9b0"/><rect x="49" y="170.4" width="0.85" height="1.3" fill="#4ec9b0"/><rect x="50" y="170.4" width="0.85" height="1.3" fill="#4ec9b0"/><rect x="51" y="170.4" width="0.85" height="1.3" fill="#4ec9b0"/><rect x="53.1" y="170.4" width="0.8" height="1.3" fill="#d4d4d4"/><rect x="8" y="172.4" width="0.85" height="1.3" fill="#c586c0"/><rect x="9" y="172.4" width="0.85" height="1.3" fill="#c586c0"/><rect x="10" y="172.4" width="0.85" height="1.3" fill="#c586c0"/><rect x="11" y="172.4" width="0.85" height="1.3" fill="#c586c0"/><rect x="12" y="172.4" width="0.85" height="1.3" fill="#c586c0"/><rect x="13" y="172.4" width="0.85" height="1.3" fill="#c586c0"/><rect x="15" y="172.4" width="0.85" height="1.3" fill="#9cdcfe"/><rect x="16" y="172.4" width="0.85" height="1.3" fill="#9cdcfe"/><rect x="17" y="172.4" width="0.85" height="1.3" fill="#9cdcfe"/><rect x="18" y="172.4" width="0.85" height="1.3" fill="#9cdcfe"/><rect x="19" y="172.4" width="0.85" height="1.3" fill="#9cdcfe"/><rect x="20" y="172.4" width="0.85" height="1.3" fill="#9cdcfe"/><rect x="21" y="172.4" width="0.85" height="1.3" fill="#9cdcfe"/><rect x="22" y="172.4" width="0.85" height="1.3" fill="#9cdcfe"/><rect x="24.1" y="172.4" width="0.8" height="1.3" fill="#d4d4d4"/><rect x="26" y="172.4" width="0.85" height="1.3" fill="#9cdcfe"/><rect x="27" y="172.4" width="0.85" height="1.3" fill="#9cdcfe"/><rect x="28" y="172.4" width="0.85" height="1.3" fill="#9cdcfe"/><rect x="29" y="172.4" width="0.85" height="1.3" fill="#9cdcfe"/><rect x="30" y="172.4" width="0.85" height="1.3" fill="#9cdcfe"/><rect x="31.1" y="172.9" width="0.7" height="0.9" fill="#d4d4d4"/><rect x="4.1" y="174.4" width="0.8" height="1.3" fill="#d4d4d4"/><rect x="4" y="178.4" width="0.85" height="1.3" fill="#569cd6"/><rect x="5" y="178.4" width="0.85" height="1.3" fill="#569cd6"/><rect x="6" y="178.4" width="0.85" height="1.3" fill="#569cd6"/><rect x="7" y="178.4" width="0.85" height="1.3" fill="#569cd6"/><rect x="8" y="178.4" width="0.85" height="1.3" fill="#569cd6"/><rect x="9" y="178.4" width="0.85" height="1.3" fill="#569cd6"/><rect x="11" y="178.4" width="0.85" height="1.3" fill="#569cd6"/><rect x="12" y="178.4" width="0.85" height="1.3" fill="#569cd6"/><rect x="13" y="178.4" width="0.85" height="1.3" fill="#569cd6"/><rect x="15" y="178.4" width="0.85" height="1.3" fill="#9cdcfe"/><rect x="16" y="178.4" width="0.85" height="1.3" fill="#9cdcfe"/><rect x="17" y="178.4" width="0.85" height="1.3" fill="#9cdcfe"/><rect x="18" y="178.4" width="0.85" height="1.3" fill="#9cdcfe"/><rect x="19" y="178.4" width="0.85" height="1.3" fill="#9cdcfe"/><rect x="20" y="178.4" width="0.85" height="1.3" fill="#9cdcfe"/><rect x="21" y="178.4" width="0.85" height="1.3" fill="#9cdcfe"/><rect x="22" y="178.4" width="0.85" height="1.3" fill="#9cdcfe"/><rect x="23.1" y="178.4" width="0.8" height="1.3" fill="#d4d4d4"/><rect x="24" y="178.4" width="0.85" height="1.3" fill="#569cd6"/><rect x="25" y="178.4" width="0.85" height="1.3" fill="#569cd6"/><rect x="26" y="178.4" width="0.85" height="1.3" fill="#569cd6"/><rect x="27.1" y="178.9" width="0.7" height="0.9" fill="#d4d4d4"/><rect x="29" y="178.4" width="0.85" height="1.3" fill="#569cd6"/><rect x="30" y="178.4" width="0.85" height="1.3" fill="#569cd6"/><rect x="31" y="178.4" width="0.85" height="1.3" fill="#569cd6"/><rect x="32" y="178.4" width="0.85" height="1.3" fill="#569cd6"/><rect x="33" y="178.4" width="0.85" height="1.3" fill="#569cd6"/><rect x="34.1" y="178.4" width="0.8" height="1.3" fill="#d4d4d4"/><rect x="35.1" y="178.9" width="0.7" height="0.9" fill="#d4d4d4"/><rect x="37" y="178.4" width="0.85" height="1.3" fill="#4ec9b0"/><rect x="38" y="178.4" width="0.85" height="1.3" fill="#4ec9b0"/><rect x="39" y="178.4" width="0.85" height="1.3" fill="#4ec9b0"/><rect x="40" y="178.4" width="0.85" height="1.3" fill="#4ec9b0"/><rect x="41.1" y="178.9" width="0.7" height="0.9" fill="#d4d4d4"/><rect x="4" y="180.4" width="0.85" height="1.3" fill="#569cd6"/><rect x="5" y="180.4" width="0.85" height="1.3" fill="#569cd6"/><rect x="6" y="180.4" width="0.85" height="1.3" fill="#569cd6"/><rect x="7" y="180.4" width="0.85" height="1.3" fill="#569cd6"/><rect x="8" y="180.4" width="0.85" height="1.3" fill="#569cd6"/><rect x="9" y="180.4" width="0.85" height="1.3" fill="#569cd6"/><rect x="10" y="180.4" width="0.85" height="1.3" fill="#569cd6"/><rect x="12" y="180.4" width="0.85" height="1.3" fill="#569cd6"/><rect x="13" y="180.4" width="0.85" height="1.3" fill="#569cd6"/><rect x="14" y="180.4" width="0.85" height="1.3" fill="#569cd6"/><rect x="15" y="180.4" width="0.85" height="1.3" fill="#569cd6"/><rect x="16" y="180.4" width="0.85" height="1.3" fill="#569cd6"/><rect x="17" y="180.4" width="0.85" height="1.3" fill="#569cd6"/><rect x="18" y="180.4" width="0.85" height="1.3" fill="#569cd6"/><rect x="19" y="180.4" width="0.85" height="1.3" fill="#569cd6"/><rect x="21" y="180.4" width="0.85" height="1.3" fill="#dcdcaa"/><rect x="22" y="180.4" width="0.85" height="1.3" fill="#dcdcaa"/><rect x="23" y="180.4" width="0.85" height="1.3" fill="#dcdcaa"/><rect x="24.1" y="180.4" width="0.8" height="1.3" fill="#dcdcaa"/><rect x="25" y="180.4" width="0.85" height="1.3" fill="#dcdcaa"/><rect x="26" y="180.4" width="0.85" height="1.3" fill="#dcdcaa"/><rect x="27" y="180.4" width="0.85" height="1.3" fill="#dcdcaa"/><rect x="28" y="180.4" width="0.85" height="1.3" fill="#dcdcaa"/><rect x="29" y="180.4" width="0.85" height="1.3" fill="#dcdcaa"/><rect x="30" y="180.4" width="0.85" height="1.3" fill="#dcdcaa"/><rect x="31" y="180.4" width="0.85" height="1.3" fill="#dcdcaa"/><rect x="32" y="180.4" width="0.85" height="1.3" fill="#dcdcaa"/><rect x="33.1" y="180.4" width="0.8" height="1.3" fill="#d4d4d4"/><rect x="34.1" y="180.4" width="0.8" height="1.3" fill="#d4d4d4"/><rect x="35.1" y="180.9" width="0.7" height="0.9" fill="#d4d4d4"/><rect x="37" y="180.4" width="0.85" height="1.3" fill="#4ec9b0"/><rect x="38" y="180.4" width="0.85" height="1.3" fill="#4ec9b0"/><rect x="39" y="180.4" width="0.85" height="1.3" fill="#4ec9b0"/><rect x="40" y="180.4" width="0.85" height="1.3" fill="#4ec9b0"/><rect x="42.1" y="180.4" width="0.8" height="1.3" fill="#d4d4d4"/><rect x="8" y="182.4" width="0.85" height="1.3" fill="#c586c0"/><rect x="9" y="182.4" width="0.85" height="1.3" fill="#c586c0"/><rect x="10" y="182.4" width="0.85" height="1.3" fill="#c586c0"/><rect x="11" y="182.4" width="0.85" height="1.3" fill="#c586c0"/><rect x="12" y="182.4" width="0.85" height="1.3" fill="#c586c0"/><rect x="13" y="182.4" width="0.85" height="1.3" fill="#c586c0"/><rect x="15" y="182.4" width="0.85" height="1.3" fill="#9cdcfe"/><rect x="16" y="182.4" width="0.85" height="1.3" fill="#9cdcfe"/><rect x="17" y="182.4" width="0.85" height="1.3" fill="#9cdcfe"/><rect x="18" y="182.4" width="0.85" height="1.3" fill="#9cdcfe"/><rect x="19" y="182.4" width="0.85" height="1.3" fill="#9cdcfe"/><rect x="20" y="182.4" width="0.85" height="1.3" fill="#9cdcfe"/><rect x="21" y="182.4" width="0.85" height="1.3" fill="#9cdcfe"/><rect x="22.1" y="182.9" width="0.7" height="0.9" fill="#d4d4d4"/><rect x="4.1" y="184.4" width="0.8" height="1.3" fill="#d4d4d4"/><rect x="0.1" y="186.4" width="0.8" height="1.3" fill="#d4d4d4"/></svg>
 <div class="a" style="left:0;top:35px;width:787px;height:5px;background:linear-gradient(rgba(0,0,0,.55),rgba(0,0,0,0))"></div>
 <div class="a" style="left:896px;top:35px;width:1px;height:614px;background:#3a3a3a"></div>
 <div class="a" style="left:897px;top:157px;width:13px;height:2px;background:#a0a0a0"></div>
 <div id="panel" class="a">
  <div class="ol" style="top:29px">Exporting asset 14 of 14 (title.png).</div>
<div class="ol" style="top:45px">Compiling shader 1 of 8 (painter-colored.vert.glsl).</div>
<div class="ol" style="top:61px">Compiling shader 2 of 8 (painter-colored.frag.glsl).</div>
<div class="ol" style="top:77px">Compiling shader 3 of 8 (painter-image.frag.glsl).</div>
<div class="ol" style="top:93px">Compiling shader 4 of 8 (painter-text.frag.glsl).</div>
<div class="ol" style="top:109px">Compiling shader 5 of 8 (painter-text.vert.glsl).</div>
<div class="ol" style="top:125px">Compiling shader 6 of 8 (painter-image.vert.glsl).</div>
<div class="ol" style="top:141px">Compiling shader 7 of 8 (painter-video.frag.glsl).</div>
<div class="ol" style="top:157px">Compiling shader 8 of 8 (painter-video.vert.glsl).</div>
<div class="ol" style="top:173px">Done.</div>
  <div class="a" style="left:0;top:0;width:910px;height:34px;background:#1e1e1e"></div>
  <div class="a" style="left:0;top:34px;width:897px;height:5px;background:linear-gradient(rgba(0,0,0,.55),rgba(0,0,0,0))"></div>
  <span class="pt" style="left:20px">PROBLEME</span>
  <span class="pt" style="left:105px;color:#e7e7e7">AUSGABE</span>
  <div class="a" style="left:104px;top:29px;width:48px;height:1px;background:#6f6f6f"></div>
  <span class="pt" style="left:184px">DEBUGGING-KONSOLE</span>
  <span class="pt" style="left:329px">TERMINAL</span>
  <div class="a" style="left:604px;top:7px;width:170px;height:20px;background:#3c3c3c"></div>
  <span class="a" style="left:609px;top:11px;font-size:12.6px;color:#f0f0f0">Aufgaben</span>
  <div class="a" style="left:896px;top:35px;width:1px;height:170px;background:#3a3a3a"></div>
  <div class="a" style="left:897px;top:34px;width:13px;height:2px;background:#8a8a8a"></div>
 </div>
</div>
<div id="qo" class="a">
 <div class="a" style="left:6px;top:6px;width:588px;height:25px;background:#3c3c3c;border:1px solid #0e639c"></div>
 <div class="a" style="left:11px;top:10px;width:1px;height:17px;background:#e0e0e0"></div>
 <div class="qi sel" style="top:37px"><span>HTML5</span></div>
<div class="qi" style="top:59px"><span>Windows</span></div>
<div class="qi" style="top:81px"><span>Windows Universal</span></div>
<div class="qi" style="top:103px"><span>macOS</span></div>
<div class="qi" style="top:125px"><span>Linux</span></div>
<div class="qi hov" style="top:147px"><span>Android</span></div>
<div class="qi" style="top:169px"><span>Android (native)</span></div>
<div class="qi" style="top:191px"><span>iOS</span></div>
<div class="qi" style="top:213px"><span>Raspberry Pi</span></div>
<div class="qi" style="top:235px"><span>tvOS</span></div>
<div class="qi" style="top:257px"><span>Tizen</span></div>
<div class="qi" style="top:279px"><span>Flash</span></div>
<div class="qi" style="top:301px"><span>node.js</span></div>
<div class="qi" style="top:323px"><span>Unity</span></div>
<div class="qi" style="top:345px"><span>XNA</span></div>
 <div class="a" style="left:590px;top:37px;width:10px;height:275px;background:rgba(121,121,121,.4)"></div>
</div>
<div id="status" class="a">
 <span style="left:27px">master*+</span>
 <span style="left:130px">0</span>
 <span style="left:156px">0</span>
 <span style="left:196px">Haxe</span>
 <span style="left:894px">Zeile 28, Spalte 33</span>
 <span style="left:1007px">Tabulatorgröße: 4</span>
 <span style="left:1114px">UTF-8</span>
 <span style="left:1160px">CRLF</span>
 <span style="left:1201px">Haxe</span>
</div>
<svg class="a" style="left:0;top:0;z-index:30" width="1245" height="927"><path d="M12.2 8.3 L16 8.9 L15.9 20.6 L12.2 21.3 Z M15.5 12.8 L20.6 8.5 L21.4 9.3 L21.3 12.4 L18.4 14.9 L21.3 17.6 L21.4 20.6 L20.6 21.2 L15.5 16.6 Z" fill="#1b7fd6"/><path d="M18 68.9 H26.8 L31 73.1 V85.9 H18 Z" fill="none" stroke="#bdbdbd" stroke-width="2.1" stroke-linejoin="round"/><path d="M25 68 L32 75.3 L25 75.3 Z" fill="#bdbdbd"/><path d="M21 65 H31.6 L35 68.4 V82.6" fill="none" stroke="#bdbdbd" stroke-width="2.1" stroke-linejoin="round"/><path d="M30.5 64 L32.2 64 L36 67.8 L36 70.5 Z" fill="#bdbdbd"/><circle cx="29" cy="122.5" r="7.3" fill="none" stroke="#bdbdbd" stroke-width="2.3"/><path d="M23.6 128 L16 135.7" stroke="#bdbdbd" stroke-width="3.2" stroke-linecap="round"/><circle cx="20.7" cy="166.3" r="2.8" fill="none" stroke="#bdbdbd" stroke-width="2.4"/><circle cx="32.1" cy="166.3" r="2.8" fill="none" stroke="#bdbdbd" stroke-width="2.4"/><circle cx="25.6" cy="185" r="2.8" fill="none" stroke="#bdbdbd" stroke-width="2.4"/><path d="M21.8 169.5 L26.4 177.5 L31 169.5 M26.4 177.5 V182" fill="none" stroke="#bdbdbd" stroke-width="3.2" stroke-linejoin="round"/><circle cx="34.1" cy="184.9" r="9" fill="#007acc"/><text x="34.1" y="189" font-family="Liberation Sans" font-size="11" fill="#fff" text-anchor="middle">8</text><circle cx="26.05" cy="226.05" r="10.9" fill="none" stroke="#ffffff" stroke-width="2.3"/><ellipse cx="23.4" cy="229.6" rx="3.9" ry="3.1" fill="#ffffff" transform="rotate(-40 23.4 229.6)"/><circle cx="28.6" cy="222.6" r="2.5" fill="#ffffff"/><path d="M17.6 228 V226.2 H21.5 M23.6 218 H24.6 V222 M29.6 217.6 V220.5 M28.8 222.6 H33.2 M30 226.6 H33.8 V228.6 M26.3 228.5 V234.3 H25" stroke="#ffffff" stroke-width="1.5" fill="none"/><path d="M18.3 219.4 L33.3 232.6" stroke="#333" stroke-width="4.6"/><path d="M18.3 219.4 L33.3 232.6" stroke="#ffffff" stroke-width="2.3"/><path d="M32.81 876.79 L35.39 877.37 L35.39 880.23 L32.81 880.81 L32.21 882.27 L33.62 884.50 L31.60 886.52 L29.37 885.11 L27.91 885.71 L27.33 888.29 L24.47 888.29 L23.89 885.71 L22.43 885.11 L20.20 886.52 L18.18 884.50 L19.59 882.27 L18.99 880.81 L16.41 880.23 L16.41 877.37 L18.99 876.79 L19.59 875.33 L18.18 873.10 L20.20 871.08 L22.43 872.49 L23.89 871.89 L24.47 869.31 L27.33 869.31 L27.91 871.89 L29.37 872.49 L31.60 871.08 L33.62 873.10 L32.21 875.33 Z" fill="#bdbdbd"/><circle cx="25.9" cy="878.8" r="3.6" fill="none" stroke="#333" stroke-width="1.6"/><path d="M282.09 67.62 L284.22 68.01 L284.22 70.19 L282.09 70.58 L281.64 71.65 L282.87 73.44 L281.34 74.97 L279.55 73.74 L278.48 74.19 L278.09 76.32 L275.91 76.32 L275.52 74.19 L274.45 73.74 L272.66 74.97 L271.13 73.44 L272.36 71.65 L271.91 70.58 L269.78 70.19 L269.78 68.01 L271.91 67.62 L272.36 66.55 L271.13 64.76 L272.66 63.23 L274.45 64.46 L275.52 64.01 L275.91 61.88 L278.09 61.88 L278.48 64.01 L279.55 64.46 L281.34 63.23 L282.87 64.76 L281.64 66.55 Z" fill="#d7d7d7"/><circle cx="277" cy="69.1" r="2.3" fill="none" stroke="#252526" stroke-width="1.5"/><rect x="301.6" y="64.4" width="13" height="9.2" fill="none" stroke="#d7d7d7" stroke-width="1.2"/><path d="M304.5 67 L306.5 69 L304.5 71" fill="none" stroke="#d7d7d7" stroke-width="0.9"/><rect x="1044.5" y="65.3" width="9" height="1.4" fill="#c5c5c5"/><rect x="1044.5" y="68.0" width="7" height="1.4" fill="#c5c5c5"/><rect x="1044.5" y="70.7" width="9" height="1.4" fill="#c5c5c5"/><rect x="1044.5" y="73.2" width="6" height="1.4" fill="#c5c5c5"/><path d="M1162.6 66 V62.6 H1167 L1169.6 65.2 V70.8" fill="none" stroke="#e8e8e8" stroke-width="1.3"/><path d="M1161 67.4 H1156.3 V75.6 H1163.8" fill="none" stroke="#e8e8e8" stroke-width="1.3"/><circle cx="1164" cy="69.8" r="3.2" fill="none" stroke="#75beff" stroke-width="1.4"/><path d="M1166.3 72.1 L1169.6 75.4" stroke="#75beff" stroke-width="1.8"/><rect x="1188.6" y="63.6" width="13" height="11" fill="none" stroke="#e0e0e0" stroke-width="1.3"/><rect x="1188.6" y="63.6" width="13" height="2.6" fill="#e0e0e0"/><rect x="1194.3" y="63.6" width="1.8" height="11" fill="#e0e0e0"/><circle cx="1221.3" cy="68.6" r="1.6" fill="#e0e0e0"/><circle cx="1226.3" cy="68.6" r="1.6" fill="#e0e0e0"/><circle cx="1231.3" cy="68.6" r="1.6" fill="#e0e0e0"/><rect x="1134.0" y="711.5" width="5" height="1.8" fill="#f0f0f0"/><rect x="1133.0" y="715.5" width="6" height="1.8" fill="#f0f0f0"/><rect x="1126.0" y="719.7" width="13" height="1.8" fill="#f0f0f0"/><rect x="1126.0" y="723.6" width="13" height="1.8" fill="#f0f0f0"/><path d="M1126.5 711 L1133.5 717.8 M1133.5 711 L1126.5 717.8" stroke="#e07060" stroke-width="1.3"/><rect x="1157.3" y="717.3" width="7.5" height="7.5" fill="none" stroke="#dcdcdc" stroke-width="1.1"/><rect x="1160.5" y="719.5" width="1.3" height="3" fill="#dcdcdc"/><path d="M1163.5 717 V714.5 A3 3 0 0 1 1169.5 714.5 V716" fill="none" stroke="#dcdcdc" stroke-width="1.1"/><path d="M1189.5 721 L1195 715.5 L1200.5 721" fill="none" stroke="#dcdcdc" stroke-width="1.5"/><path d="M1222.5 714.5 L1229.5 721.5 M1229.5 714.5 L1222.5 721.5" stroke="#f0f0f0" stroke-width="2"/><path d="M1095 713 L1101 713 L1098 719 Z" fill="#ddd"/><circle cx="17.6" cy="910.8" r="1.5" fill="none" stroke="#fff" stroke-width="1.2"/><circle cx="17.6" cy="920" r="1.5" fill="none" stroke="#fff" stroke-width="1.2"/><circle cx="23.3" cy="912" r="1.5" fill="none" stroke="#fff" stroke-width="1.2"/><path d="M17.6 912.3 V918.5 M23.3 913.5 C23.3 917 18 916 17.6 919" fill="none" stroke="#fff" stroke-width="1.2"/><path d="M93.5 915 A4.5 4.5 0 0 1 101 911.8 M102 915.5 A4.5 4.5 0 0 1 94.5 918.8" fill="none" stroke="#fff" stroke-width="1.8"/><path d="M99 910 L103.3 909.8 L103 914 Z M96.5 920.5 L92.3 920.8 L92.5 916.5 Z" fill="#fff"/><circle cx="121.4" cy="915.5" r="5.4" fill="#fff"/><path d="M119 913.1 L123.8 917.9 M123.8 913.1 L119 917.9" stroke="#007acc" stroke-width="1.5"/><path d="M147.3 910.5 L153 920.8 L141.6 920.8 Z" fill="#fff"/><rect x="146.6" y="913.5" width="1.4" height="4" fill="#007acc"/><rect x="146.6" y="918.6" width="1.4" height="1.3" fill="#007acc"/><path d="M191.52 914.22 L193.23 914.58 L193.23 916.42 L191.52 916.78 L191.13 917.72 L192.09 919.18 L190.78 920.49 L189.32 919.53 L188.38 919.92 L188.02 921.63 L186.18 921.63 L185.82 919.92 L184.88 919.53 L183.42 920.49 L182.11 919.18 L183.07 917.72 L182.68 916.78 L180.97 916.42 L180.97 914.58 L182.68 914.22 L183.07 913.28 L182.11 911.82 L183.42 910.51 L184.88 911.47 L185.82 911.08 L186.18 909.37 L188.02 909.37 L188.38 911.08 L189.32 911.47 L190.78 910.51 L192.09 911.82 L191.13 913.28 Z" fill="#fff"/><circle cx="187.1" cy="915.5" r="1.9" fill="#007acc"/></svg>
</body></html>
